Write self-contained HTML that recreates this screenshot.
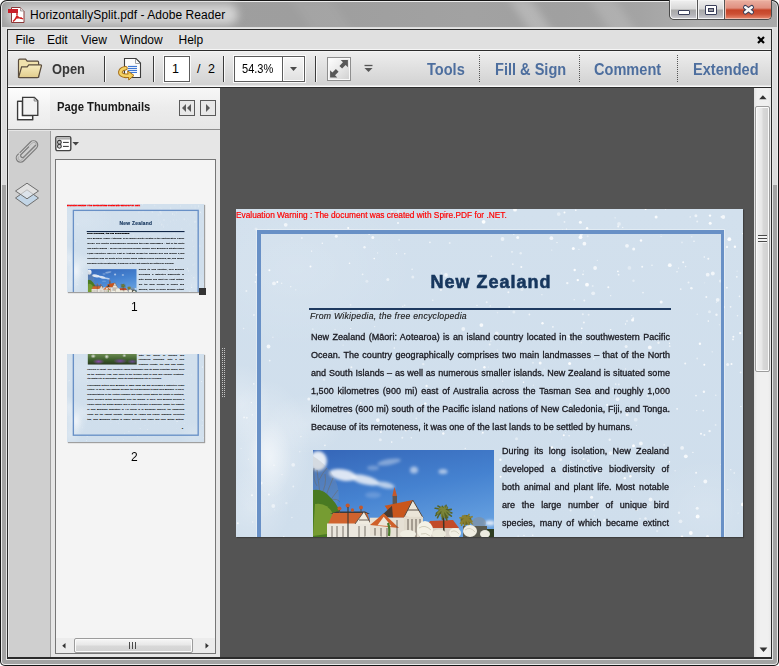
<!DOCTYPE html>
<html><head><meta charset="utf-8">
<style>
*{box-sizing:border-box;margin:0;padding:0}
html,body{width:779px;height:666px;overflow:hidden;background:#fff}
body{position:relative;font-family:"Liberation Sans",sans-serif}
.a{position:absolute}
svg{position:absolute;overflow:visible}
/* window frame */
#frame{left:0;top:0;width:779px;height:666px;border-radius:7px 7px 5px 5px;background:#a3a3a3;box-shadow:inset 0 0 0 1px #151515,inset 0 0 0 2px #ececec}
#frameTop{left:2px;top:2px;width:775px;height:183px;background:linear-gradient(#dedede,#dadada);border-radius:5px 5px 0 0}
#title{left:2px;top:2px;width:775px;height:26px;border-radius:5px 5px 0 0;overflow:hidden;background:linear-gradient(90deg,#a0a0a0 0,#9e9e9e 300px,#a2a2a2 470px,#a0a0a0 560px,#a4a4a4 640px,#b0b0b0 700px,#a8a8a8 779px)}
.streak{position:absolute;top:-4px;height:36px;background:rgba(255,255,255,0.22);transform:skewX(34deg);filter:blur(5px)}
#glow{left:6px;top:4px;width:232px;height:21px;background:#d2d2d2;border-radius:10px;filter:blur(4px)}
#titleLine{left:2px;top:27px;width:775px;height:1px;background:#dedede}
#ttext{left:30px;top:8px;font-size:12px;color:#000;white-space:nowrap;letter-spacing:0.05px}
/* client */
#client{left:7px;top:29px;width:765px;height:630px;background:#2b2b2b}
#menubar{left:8px;top:30px;width:763px;height:20px;background:#e0e0e0;border-bottom:1px solid #f6f6f6}
.mi{top:33px;font-size:12px;color:#000;white-space:nowrap}
#toolbar{left:8px;top:51px;width:763px;height:36px;background:linear-gradient(#fbfbfb 0,#ededed 1px,#d2d2d2 34px,#f8f8f8 35px)}
.sep{width:1px;background:#3c3c3c;top:56px;height:26px;box-shadow:1px 0 0 #fafafa}
.dsep{width:1px;top:55px;height:27px;background:repeating-linear-gradient(#555 0 1px,transparent 1px 2px)}
.tb{font-weight:bold;font-size:16px;color:#4d6e9e;top:61px;white-space:nowrap;transform:scaleX(0.91);transform-origin:0 0}
#doc{left:220px;top:88px;width:534px;height:569px;background:#545454}
#vscroll{left:754px;top:88px;width:17px;height:569px;background:linear-gradient(90deg,#e2e2e2,#f0f0f0 3px,#f0f0f0 14px,#e8e8e8)}
#panel{left:8px;top:88px;width:212px;height:569px;background:#e6e6e6}
#phead{left:8px;top:88px;width:212px;height:42px;background:linear-gradient(#f7f7f7,#ececec 20px,#e6e6e6);border-bottom:1px solid #8c8c8c}
#pheadL{left:8px;top:88px;width:42px;height:42px;background:linear-gradient(#fdfdfd,#f2f2f2 20px,#ebebeb);border-bottom:1px solid #8c8c8c}
#strip{left:8px;top:131px;width:43px;height:526px;background:#cfcfcf;border-left:1px solid #e8e8e8;border-right:1px solid #9e9e9e}
#tpane{left:55px;top:159px;width:161px;height:495px;background:#f4f4f4;border:1px solid #767676}

.page{position:absolute;left:0;top:0;width:507px;height:328px;overflow:hidden;background:#d0dfec}
.page svg{position:absolute}
.pbg{position:absolute;left:0;top:0;width:507px;height:328px;background:
 radial-gradient(ellipse 22px 40px at 34px 250px,rgba(255,255,255,0.45),rgba(255,255,255,0) 100%),
 radial-gradient(ellipse 45px 70px at 30px 240px,rgba(255,255,255,0.4),rgba(255,255,255,0) 100%),
 radial-gradient(ellipse 40px 30px at 70px 215px,rgba(255,255,255,0.22),rgba(255,255,255,0) 100%),
 radial-gradient(ellipse 30px 40px at 5px 195px,rgba(255,255,255,0.3),rgba(255,255,255,0) 100%),
 radial-gradient(ellipse 40px 40px at 15px 300px,rgba(255,255,255,0.25),rgba(255,255,255,0) 100%),
 radial-gradient(ellipse 60px 50px at 470px 300px,rgba(255,255,255,0.14),rgba(255,255,255,0) 100%),
 radial-gradient(ellipse 120px 80px at 60px 60px,rgba(255,255,255,0.12),rgba(255,255,255,0) 100%),
 linear-gradient(#d2e0ed,#cfdeec)}
.warn{position:absolute;left:0;top:0.5px;font-size:8.3px;line-height:10px;color:#ff0000;white-space:nowrap;-webkit-text-stroke:0.2px #f00}
.pframe{position:absolute;left:21px;top:21px;width:467px;height:400px;border:4px solid #6890c6;border-right-width:3px;box-shadow:0 0 0 1px rgba(255,255,255,0.35)}
.ptitle{position:absolute;left:194.5px;top:62.5px;font-weight:bold;font-size:18px;line-height:20px;letter-spacing:1.0px;color:#17375e;white-space:nowrap;-webkit-text-stroke:0.6px #17375e}
.prule{position:absolute;left:73px;top:99px;width:362px;height:2px;background:#1f3a60}
.pital{position:absolute;left:74px;top:102px;font-style:italic;font-size:8.7px;line-height:10px;color:#222;-webkit-text-stroke:0.15px #222;white-space:nowrap;letter-spacing:0.25px}
.pl{position:absolute;font-size:9px;line-height:18px;color:#18181f;white-space:nowrap;letter-spacing:0.05px;-webkit-text-stroke:0.3px #18181f}
#pg1t .pl,#pg2t .pl{color:#000;-webkit-text-stroke:0.35px #000}
#pg1t .prule{height:3.7px;top:99.9px;background:#0c2244}
#pg1t .pframe,#pg2t .pframe2{border-width:5px}
#pg1t .warn{-webkit-text-stroke:1.6px #f00}
#pg1t .pital{color:#000;-webkit-text-stroke:0.9px #000}
.photo{position:absolute;left:77px;top:241px;width:181px;height:100px;overflow:hidden}
.pframe2{position:absolute;left:21px;top:-100px;width:467px;height:403px;border:4px solid #6890c6;border-right-width:3px}
.photo2{position:absolute;left:77px;top:0;width:181px;height:39px;background:radial-gradient(ellipse 10px 8px at 20px 8px,rgba(240,240,240,0.9),transparent),radial-gradient(ellipse 9px 9px at 70px 10px,rgba(245,245,245,0.9),transparent),radial-gradient(ellipse 8px 7px at 135px 6px,rgba(235,235,240,0.8),transparent),radial-gradient(ellipse 22px 10px at 40px 28px,#8a4aa8,transparent),radial-gradient(ellipse 26px 10px at 120px 26px,#7a48a0,transparent),radial-gradient(ellipse 20px 9px at 165px 28px,#6a4a90,transparent),linear-gradient(#6a8a50,#3a5a2a 60%,#2a3a20)}
</style></head><body>
<div id="frame" class="a"></div>
<div id="frameTop" class="a"></div>
<div id="title" class="a"><div class="streak" style="left:518px;width:22px"></div><div class="streak" style="left:598px;width:26px;background:rgba(255,255,255,0.14)"></div><div class="streak" style="left:300px;width:40px;background:rgba(255,255,255,0.06)"></div></div>
<div id="glow" class="a"></div>
<div id="titleLine" class="a"></div>
<!-- pdf icon -->
<svg style="left:0;top:0" width="30" height="28">
 <path d="M11.5 7.5 H20.5 L24 11 V22.5 H11.5 Z" fill="#fff" stroke="#8a3a3a" stroke-width="1"/>
 <path d="M20.5 7.5 V11 H24" fill="#e0e0e0" stroke="#9a8a8a" stroke-width="0.8"/>
 <rect x="8" y="9" width="10" height="4" fill="#c8202a"/>
 <path d="M17 13 C17.5 16 16 19 13 21.5 M15.5 18 C18 17.5 21 17.5 23 19 M17 13 C16 16 19 19 22 18" fill="none" stroke="#d02020" stroke-width="1.4"/>
</svg>
<div id="ttext" class="a">HorizontallySplit.pdf - Adobe Reader</div>
<!-- caption buttons -->
<div class="a" style="left:669px;top:0;width:103px;height:20px;border:1px solid #4a4a4a;border-top:none;border-radius:0 0 5px 5px;overflow:hidden;background:#555">
 <div class="a" style="left:0;top:0;width:27px;height:19px;border-radius:0 0 0 4px;background:linear-gradient(#f0f0f0 0,#d8d8d8 9px,#a9a9a9 10px,#b4b4b8 15px,#d0d0d6 19px);box-shadow:inset 0 0 0 1px #f4f4f4"></div>
 <div class="a" style="left:28px;top:0;width:26px;height:19px;background:linear-gradient(#f0f0f0 0,#d8d8d8 9px,#a9a9a9 10px,#b4b4b8 15px,#d0d0d6 19px);box-shadow:inset 0 0 0 1px #f4f4f4"></div>
 <div class="a" style="left:55px;top:0;width:47px;height:19px;border-radius:0 0 4px 0;background:linear-gradient(#eab0a2 0,#e09080 8px,#c64428 10px,#cc5034 14px,#e88a70 19px);box-shadow:inset 0 0 0 1px #f0b8a8"></div>
</div>
<div class="a" style="left:678px;top:10px;width:12px;height:5px;background:#fff;border:1px solid #3a3f5a;border-radius:1px"></div>
<div class="a" style="left:705px;top:5px;width:12px;height:10px;background:#fff;border:1px solid #3a3f5a;border-radius:1px"></div>
<div class="a" style="left:708px;top:8px;width:6px;height:4px;background:#9a9aa0;border:1px solid #3a3f5a"></div>
<svg style="left:741px;top:3px" width="16" height="14">
 <path d="M4.3 4.3 L10.7 9.2 M10.7 4.3 L4.3 9.2" stroke="#3a3f5a" stroke-width="4.6" stroke-linecap="round"/>
 <path d="M4.3 4.3 L10.7 9.2 M10.7 4.3 L4.3 9.2" stroke="#fafafa" stroke-width="2.6" stroke-linecap="round"/>
</svg>

<div class="a" style="left:6px;top:28px;width:767px;height:632px;background:#e6e6e6"></div>
<div id="client" class="a"></div>
<div id="menubar" class="a"></div>
<div class="a mi" style="left:15.5px">File</div>
<div class="a mi" style="left:47px">Edit</div>
<div class="a mi" style="left:81px">View</div>
<div class="a mi" style="left:120px">Window</div>
<div class="a mi" style="left:178.5px">Help</div>
<svg style="left:756px;top:35px" width="10" height="10">
 <path d="M2 2 L8 8 M8 2 L2 8" stroke="#000" stroke-width="2.2"/>
</svg>

<div id="toolbar" class="a"></div>
<!-- folder icon -->
<svg style="left:0;top:50px" width="50" height="36">
 <defs><linearGradient id="fg" x1="0" y1="0" x2="0" y2="1"><stop offset="0" stop-color="#f8eec0"/><stop offset="1" stop-color="#e2cc8c"/></linearGradient></defs>
 <path d="M18.5 10.5 Q18.5 9.2 19.8 9.2 H25.6 L27.2 11.2 H37.6 Q38.6 11.2 38.6 12.4 V27.2 H18.5 Z" fill="#f0e2ac" stroke="#5a4c3c" stroke-width="1.2"/>
 <path d="M21.6 16.8 H27.2 L28.8 14.8 H40.6 Q41.8 14.8 41.4 16 L38.6 26.6 Q38.4 27.6 37.4 27.6 H19.6 Q18.6 27.6 18.8 26.6 Z" fill="url(#fg)" stroke="#5a4c3c" stroke-width="1.2"/>
</svg>
<div class="a" style="left:52px;top:61px;font-weight:bold;font-size:14px;color:#383838;transform:scaleX(0.92);transform-origin:0 0">Open</div>
<div class="a sep" style="left:104px"></div>
<!-- create pdf icon -->
<svg style="left:110px;top:50px" width="40" height="36">
 <path d="M14.5 8.5 H26 L30.5 13 V27.5 H14.5 Z" fill="#fcfcfc" stroke="#3c3c3c" stroke-width="1.1"/>
 <path d="M25.5 9 V13.5 H30" fill="none" stroke="#9a9a9a" stroke-width="0.9"/>
 <path d="M18 16.4 H27 M18 18.4 H27 M18 20.4 H27 M18 22.4 H27 M18 24.4 H21" stroke="#2a6ad0" stroke-width="1"/>
 <path d="M15.5 18.2 C10.5 18.6 9.2 22.6 11.6 24.6 C13.2 26 16 26 18.6 25.6" fill="none" stroke="#a8701a" stroke-width="4.6" stroke-linecap="round"/>
 <path d="M17.6 20.8 L24 25.4 L18.8 30 Z" fill="#f0c850" stroke="#a8701a" stroke-width="1" stroke-linejoin="round"/>
 <path d="M15.5 18.2 C10.5 18.6 9.2 22.6 11.6 24.6 C13.2 26 16 26 19.6 25.6" fill="none" stroke="#f4d264" stroke-width="2.6" stroke-linecap="round"/>
</svg>
<div class="a sep" style="left:153px"></div>
<div class="a" style="left:164px;top:56px;width:26px;height:26px;background:#fff;border:1px solid #5c5c5c;box-shadow:0 0 0 1px #fafafa"></div>
<div class="a" style="left:172px;top:62px;font-size:12.5px;color:#000">1</div>
<div class="a" style="left:197px;top:62px;font-size:12.5px;color:#000;word-spacing:4px">/ 2</div>
<div class="a sep" style="left:223px"></div>
<div class="a" style="left:234px;top:56px;width:71px;height:26px;background:#fff;border:1px solid #5c5c5c;box-shadow:0 0 0 1px #fafafa"></div>
<div class="a" style="left:282px;top:57px;width:22px;height:24px;background:linear-gradient(#f6f6f6,#e0e0e0);border-left:1px solid #5c5c5c;box-shadow:inset 1px 1px 0 #fff,inset -1px -1px 0 #fff"></div>
<div class="a" style="left:242px;top:61px;font-size:13px;color:#000;transform:scaleX(0.85);transform-origin:0 0">54.3%</div>
<svg style="left:288px;top:66px" width="12" height="8"><path d="M2 1 H9 L5.5 5 Z" fill="#4a4a4a"/></svg>
<div class="a sep" style="left:315px"></div>
<!-- fullscreen -->
<div class="a" style="left:327px;top:57px;width:24px;height:24px;border:1px solid #8e8e8e;background:linear-gradient(135deg,#ffffff,#e4e4e4 60%,#cfcfcf);box-shadow:inset 0 0 0 1px #f8f8f8"></div>
<svg style="left:327px;top:57px" width="24" height="24">
 <path d="M13.7 3.1 L20.9 3.1 L20.9 10.3 L18.64 8.04 L15.1 11.58 L12.42 8.9 L15.96 5.36 Z" fill="#585858"/>
 <path d="M3.1 13.3 L5.36 15.56 L8.9 12.02 L11.58 14.7 L8.04 18.24 L10.3 20.5 L3.1 20.5 Z" fill="#585858"/>
</svg>
<svg style="left:362px;top:62px" width="13" height="12">
 <path d="M2.5 3.5 H10.5" stroke="#555" stroke-width="1.3"/>
 <path d="M2.5 6 H10.5 L6.5 10 Z" fill="#555"/>
</svg>
<div class="a tb" style="left:427px">Tools</div>
<div class="a dsep" style="left:479px"></div>
<div class="a tb" style="left:494.5px">Fill &amp; Sign</div>
<div class="a dsep" style="left:579px"></div>
<div class="a tb" style="left:594px">Comment</div>
<div class="a dsep" style="left:677px"></div>
<div class="a tb" style="left:692.5px">Extended</div>

<div id="doc" class="a"></div>
<div id="vscroll" class="a"></div>
<div id="panel" class="a"></div>
<div id="phead" class="a"></div>
<div id="pheadL" class="a"></div>
<div id="strip" class="a"></div>
<div id="tpane" class="a"></div>
<!-- splitter dots -->
<svg style="left:221px;top:348px" width="5" height="49"><rect x="1" y="0" width="1" height="1" fill="#c4c4c4"/><rect x="3" y="0" width="1" height="1" fill="#c4c4c4"/><rect x="1" y="2" width="1" height="1" fill="#c4c4c4"/><rect x="3" y="2" width="1" height="1" fill="#c4c4c4"/><rect x="1" y="4" width="1" height="1" fill="#c4c4c4"/><rect x="3" y="4" width="1" height="1" fill="#c4c4c4"/><rect x="1" y="6" width="1" height="1" fill="#c4c4c4"/><rect x="3" y="6" width="1" height="1" fill="#c4c4c4"/><rect x="1" y="8" width="1" height="1" fill="#c4c4c4"/><rect x="3" y="8" width="1" height="1" fill="#c4c4c4"/><rect x="1" y="10" width="1" height="1" fill="#c4c4c4"/><rect x="3" y="10" width="1" height="1" fill="#c4c4c4"/><rect x="1" y="12" width="1" height="1" fill="#c4c4c4"/><rect x="3" y="12" width="1" height="1" fill="#c4c4c4"/><rect x="1" y="14" width="1" height="1" fill="#c4c4c4"/><rect x="3" y="14" width="1" height="1" fill="#c4c4c4"/><rect x="1" y="16" width="1" height="1" fill="#c4c4c4"/><rect x="3" y="16" width="1" height="1" fill="#c4c4c4"/><rect x="1" y="18" width="1" height="1" fill="#c4c4c4"/><rect x="3" y="18" width="1" height="1" fill="#c4c4c4"/><rect x="1" y="20" width="1" height="1" fill="#c4c4c4"/><rect x="3" y="20" width="1" height="1" fill="#c4c4c4"/><rect x="1" y="22" width="1" height="1" fill="#c4c4c4"/><rect x="3" y="22" width="1" height="1" fill="#c4c4c4"/><rect x="1" y="24" width="1" height="1" fill="#c4c4c4"/><rect x="3" y="24" width="1" height="1" fill="#c4c4c4"/><rect x="1" y="26" width="1" height="1" fill="#c4c4c4"/><rect x="3" y="26" width="1" height="1" fill="#c4c4c4"/><rect x="1" y="28" width="1" height="1" fill="#c4c4c4"/><rect x="3" y="28" width="1" height="1" fill="#c4c4c4"/><rect x="1" y="30" width="1" height="1" fill="#c4c4c4"/><rect x="3" y="30" width="1" height="1" fill="#c4c4c4"/><rect x="1" y="32" width="1" height="1" fill="#c4c4c4"/><rect x="3" y="32" width="1" height="1" fill="#c4c4c4"/><rect x="1" y="34" width="1" height="1" fill="#c4c4c4"/><rect x="3" y="34" width="1" height="1" fill="#c4c4c4"/><rect x="1" y="36" width="1" height="1" fill="#c4c4c4"/><rect x="3" y="36" width="1" height="1" fill="#c4c4c4"/><rect x="1" y="38" width="1" height="1" fill="#c4c4c4"/><rect x="3" y="38" width="1" height="1" fill="#c4c4c4"/><rect x="1" y="40" width="1" height="1" fill="#c4c4c4"/><rect x="3" y="40" width="1" height="1" fill="#c4c4c4"/><rect x="1" y="42" width="1" height="1" fill="#c4c4c4"/><rect x="3" y="42" width="1" height="1" fill="#c4c4c4"/><rect x="1" y="44" width="1" height="1" fill="#c4c4c4"/><rect x="3" y="44" width="1" height="1" fill="#c4c4c4"/><rect x="1" y="46" width="1" height="1" fill="#c4c4c4"/><rect x="3" y="46" width="1" height="1" fill="#c4c4c4"/><rect x="1" y="48" width="1" height="1" fill="#c4c4c4"/><rect x="3" y="48" width="1" height="1" fill="#c4c4c4"/></svg>
<!-- right scrollbar -->
<svg style="left:754px;top:88px" width="17" height="569">
 <path d="M5.2 11.2 H12.6 L8.9 7.2 Z" fill="#333"/>
 <path d="M5.6 559.6 H13.4 L9.5 564 Z" fill="#333"/>
</svg>
<div class="a" style="left:755px;top:106px;width:15px;height:266px;border:1px solid #9c9c9c;border-radius:2px;background:linear-gradient(90deg,#f4f4f4,#e6e6e6 45%,#d8d8d8 55%,#d0d0d0);box-shadow:inset 0 0 0 1px #fbfbfb"></div>
<div class="a" style="left:758px;top:235px;width:9px;height:8px;background:repeating-linear-gradient(#4a4a4a 0 1px,#f4f4f4 1px 3px)"></div>
<!-- page -->
<div class="a" style="left:236px;top:209px;width:507px;height:328px;box-shadow:1px 1px 1px rgba(0,0,0,0.25)"><div class="page" id="pg1"><div class="pbg"></div><svg width="507" height="328" style="left:0;top:0"><defs><filter id="sbpg1"><feGaussianBlur stdDeviation="0.35"/></filter></defs><g filter="url(#sbpg1)"><circle cx="236.1" cy="166.6" r="0.8" fill="#fff" opacity="0.83"/><circle cx="241.2" cy="201.4" r="1.9" fill="#fff" opacity="0.53"/><circle cx="46.0" cy="265.6" r="0.6" fill="#fff" opacity="0.71"/><circle cx="304.0" cy="255.2" r="0.9" fill="#fff" opacity="0.66"/><circle cx="324.6" cy="163.9" r="1.9" fill="#fff" opacity="0.74"/><circle cx="260.0" cy="9.8" r="0.7" fill="#fff" opacity="0.59"/><circle cx="429.6" cy="0.2" r="0.6" fill="#fff" opacity="0.63"/><circle cx="497.0" cy="130.4" r="0.9" fill="#fff" opacity="0.82"/><circle cx="136.8" cy="28.6" r="1.5" fill="#fff" opacity="0.80"/><circle cx="59.8" cy="80.8" r="0.6" fill="#fff" opacity="0.63"/><circle cx="246.8" cy="223.7" r="0.9" fill="#fff" opacity="0.94"/><circle cx="390.1" cy="137.5" r="1.5" fill="#fff" opacity="0.60"/><circle cx="407.3" cy="99.8" r="0.9" fill="#fff" opacity="0.46"/><circle cx="504.9" cy="197.5" r="0.6" fill="#fff" opacity="0.94"/><circle cx="166.8" cy="97.2" r="0.7" fill="#fff" opacity="0.48"/><circle cx="322.7" cy="5.1" r="1.9" fill="#fff" opacity="0.43"/><circle cx="297.7" cy="273.0" r="1.5" fill="#fff" opacity="0.46"/><circle cx="476.8" cy="64.5" r="1.9" fill="#fff" opacity="0.71"/><circle cx="213.7" cy="34.1" r="1.0" fill="#fff" opacity="0.49"/><circle cx="357.2" cy="84.3" r="1.9" fill="#fff" opacity="0.53"/><circle cx="88.9" cy="236.3" r="0.9" fill="#fff" opacity="0.64"/><circle cx="331.3" cy="202.0" r="0.9" fill="#fff" opacity="0.90"/><circle cx="103.4" cy="5.4" r="1.9" fill="#fff" opacity="0.50"/><circle cx="493.3" cy="30.2" r="1.9" fill="#fff" opacity="0.94"/><circle cx="333.1" cy="226.7" r="0.8" fill="#fff" opacity="0.70"/><circle cx="468.3" cy="155.7" r="1.0" fill="#fff" opacity="0.93"/><circle cx="10.8" cy="208.7" r="1.0" fill="#fff" opacity="0.54"/><circle cx="506.7" cy="24.7" r="0.6" fill="#fff" opacity="0.89"/><circle cx="373.7" cy="230.8" r="1.2" fill="#fff" opacity="0.56"/><circle cx="290.4" cy="205.0" r="0.6" fill="#fff" opacity="0.72"/><circle cx="446.1" cy="238.9" r="1.9" fill="#fff" opacity="0.61"/><circle cx="425.1" cy="27.5" r="0.6" fill="#fff" opacity="0.54"/><circle cx="57.2" cy="255.8" r="1.9" fill="#fff" opacity="0.50"/><circle cx="165.8" cy="218.4" r="1.5" fill="#fff" opacity="0.83"/><circle cx="382.6" cy="65.7" r="0.9" fill="#fff" opacity="0.70"/><circle cx="160.5" cy="44.7" r="0.6" fill="#fff" opacity="0.78"/><circle cx="481.7" cy="90.8" r="1.9" fill="#fff" opacity="0.63"/><circle cx="469.3" cy="272.5" r="1.9" fill="#fff" opacity="0.75"/><circle cx="363.2" cy="276.1" r="1.2" fill="#fff" opacity="0.39"/><circle cx="16.0" cy="286.3" r="1.0" fill="#fff" opacity="0.69"/><circle cx="156.7" cy="259.6" r="0.8" fill="#fff" opacity="0.59"/><circle cx="96.3" cy="252.3" r="0.8" fill="#fff" opacity="0.83"/><circle cx="498.9" cy="37.8" r="1.2" fill="#fff" opacity="0.93"/><circle cx="347.0" cy="65.4" r="0.8" fill="#fff" opacity="0.78"/><circle cx="382.8" cy="175.4" r="0.9" fill="#fff" opacity="0.51"/><circle cx="175.3" cy="228.7" r="0.8" fill="#fff" opacity="0.59"/><circle cx="401.5" cy="297.2" r="1.5" fill="#fff" opacity="0.43"/><circle cx="404.0" cy="309.7" r="0.9" fill="#fff" opacity="0.41"/><circle cx="439.1" cy="261.8" r="0.7" fill="#fff" opacity="0.48"/><circle cx="272.2" cy="259.4" r="0.6" fill="#fff" opacity="0.56"/><circle cx="389.5" cy="159.9" r="0.7" fill="#fff" opacity="0.61"/><circle cx="17.8" cy="174.9" r="0.8" fill="#fff" opacity="0.63"/><circle cx="506.9" cy="295.4" r="1.9" fill="#fff" opacity="0.92"/><circle cx="249.7" cy="311.3" r="0.9" fill="#fff" opacity="0.61"/><circle cx="283.3" cy="272.6" r="0.8" fill="#fff" opacity="0.66"/><circle cx="427.7" cy="183.7" r="1.5" fill="#fff" opacity="0.92"/><circle cx="441.1" cy="199.9" r="0.8" fill="#fff" opacity="0.93"/><circle cx="265.8" cy="187.9" r="0.7" fill="#fff" opacity="0.65"/><circle cx="285.4" cy="161.1" r="0.7" fill="#fff" opacity="0.91"/><circle cx="204.9" cy="80.8" r="1.2" fill="#fff" opacity="0.61"/><circle cx="413.6" cy="295.4" r="1.2" fill="#fff" opacity="0.42"/><circle cx="212.7" cy="9.6" r="0.6" fill="#fff" opacity="0.37"/><circle cx="78.9" cy="3.9" r="1.2" fill="#fff" opacity="0.50"/><circle cx="252.9" cy="163.9" r="1.0" fill="#fff" opacity="0.78"/><circle cx="355.6" cy="288.2" r="1.5" fill="#fff" opacity="0.85"/><circle cx="270.7" cy="71.6" r="0.8" fill="#fff" opacity="0.49"/><circle cx="213.8" cy="259.1" r="1.5" fill="#fff" opacity="0.73"/><circle cx="405.0" cy="31.5" r="1.2" fill="#fff" opacity="0.90"/><circle cx="491.0" cy="37.9" r="1.2" fill="#fff" opacity="0.65"/><circle cx="347.6" cy="62.0" r="0.7" fill="#fff" opacity="0.36"/><circle cx="244.0" cy="62.2" r="0.8" fill="#fff" opacity="0.85"/><circle cx="502.1" cy="304.0" r="0.6" fill="#fff" opacity="0.43"/><circle cx="345.2" cy="25.5" r="1.5" fill="#fff" opacity="0.63"/><circle cx="261.3" cy="141.1" r="0.6" fill="#fff" opacity="0.73"/><circle cx="20.7" cy="65.7" r="1.2" fill="#fff" opacity="0.79"/><circle cx="205.5" cy="64.0" r="0.6" fill="#fff" opacity="0.54"/><circle cx="460.7" cy="308.2" r="0.9" fill="#fff" opacity="0.65"/><circle cx="498.2" cy="264.0" r="0.7" fill="#fff" opacity="0.80"/><circle cx="394.4" cy="267.2" r="1.2" fill="#fff" opacity="0.88"/><circle cx="352.3" cy="251.7" r="1.5" fill="#fff" opacity="0.47"/><circle cx="93.7" cy="261.5" r="0.7" fill="#fff" opacity="0.36"/><circle cx="180.3" cy="209.5" r="0.9" fill="#fff" opacity="0.51"/><circle cx="487.4" cy="98.0" r="1.5" fill="#fff" opacity="0.69"/><circle cx="325.6" cy="230.0" r="0.6" fill="#fff" opacity="0.42"/><circle cx="54.8" cy="77.7" r="0.6" fill="#fff" opacity="0.81"/><circle cx="328.5" cy="3.5" r="1.0" fill="#fff" opacity="0.89"/><circle cx="288.0" cy="326.4" r="0.7" fill="#fff" opacity="0.68"/><circle cx="338.9" cy="313.4" r="0.8" fill="#fff" opacity="0.58"/><circle cx="491.8" cy="280.7" r="0.6" fill="#fff" opacity="0.61"/><circle cx="250.7" cy="93.3" r="1.0" fill="#fff" opacity="0.57"/><circle cx="144.9" cy="214.9" r="1.0" fill="#fff" opacity="0.75"/><circle cx="379.1" cy="8.8" r="0.6" fill="#fff" opacity="0.73"/><circle cx="207.3" cy="224.5" r="1.2" fill="#fff" opacity="0.80"/><circle cx="37.3" cy="297.0" r="1.9" fill="#fff" opacity="0.50"/><circle cx="383.0" cy="14.9" r="1.9" fill="#fff" opacity="0.44"/><circle cx="486.7" cy="80.4" r="0.6" fill="#fff" opacity="0.72"/><circle cx="231.0" cy="66.8" r="0.8" fill="#fff" opacity="0.42"/><circle cx="224.5" cy="219.1" r="1.0" fill="#fff" opacity="0.73"/><circle cx="345.8" cy="119.4" r="0.8" fill="#fff" opacity="0.92"/><circle cx="372.3" cy="78.2" r="1.0" fill="#fff" opacity="0.82"/><circle cx="316.9" cy="117.8" r="0.9" fill="#fff" opacity="0.73"/><circle cx="381.9" cy="62.3" r="0.9" fill="#fff" opacity="0.88"/><circle cx="20.0" cy="19.9" r="1.5" fill="#fff" opacity="0.37"/><circle cx="19.3" cy="73.0" r="0.7" fill="#fff" opacity="0.90"/><circle cx="245.4" cy="116.1" r="1.9" fill="#fff" opacity="0.80"/><circle cx="425.1" cy="24.4" r="0.9" fill="#fff" opacity="0.62"/><circle cx="378.9" cy="128.0" r="0.8" fill="#fff" opacity="0.74"/><circle cx="501.5" cy="106.7" r="0.8" fill="#fff" opacity="0.61"/><circle cx="245.8" cy="224.8" r="0.6" fill="#fff" opacity="0.40"/><circle cx="108.1" cy="217.2" r="1.0" fill="#fff" opacity="0.65"/><circle cx="110.9" cy="215.6" r="0.7" fill="#fff" opacity="0.54"/><circle cx="348.3" cy="91.6" r="1.0" fill="#fff" opacity="0.62"/><circle cx="112.2" cy="317.4" r="0.9" fill="#fff" opacity="0.40"/><circle cx="420.1" cy="7.9" r="1.5" fill="#fff" opacity="0.83"/><circle cx="374.6" cy="120.8" r="0.8" fill="#fff" opacity="0.85"/><circle cx="285.3" cy="57.9" r="1.0" fill="#fff" opacity="0.84"/><circle cx="112.2" cy="18.9" r="1.0" fill="#fff" opacity="0.93"/><circle cx="330.2" cy="263.8" r="1.0" fill="#fff" opacity="0.82"/><circle cx="455.8" cy="27.8" r="0.8" fill="#fff" opacity="0.41"/><circle cx="413.8" cy="138.4" r="1.9" fill="#fff" opacity="0.81"/><circle cx="264.4" cy="250.8" r="1.2" fill="#fff" opacity="0.83"/><circle cx="168.8" cy="44.8" r="0.7" fill="#fff" opacity="0.77"/><circle cx="463.9" cy="134.7" r="1.2" fill="#fff" opacity="0.86"/><circle cx="408.6" cy="273.5" r="0.6" fill="#fff" opacity="0.66"/><circle cx="360.0" cy="263.1" r="1.5" fill="#fff" opacity="0.90"/><circle cx="346.8" cy="105.2" r="1.0" fill="#fff" opacity="0.51"/><circle cx="449.2" cy="154.6" r="1.0" fill="#fff" opacity="0.74"/><circle cx="393.4" cy="58.9" r="1.9" fill="#fff" opacity="0.36"/><circle cx="243.9" cy="262.5" r="0.9" fill="#fff" opacity="0.46"/><circle cx="301.6" cy="73.5" r="1.0" fill="#fff" opacity="0.59"/><circle cx="461.7" cy="307.5" r="1.9" fill="#fff" opacity="0.86"/><circle cx="334.7" cy="253.1" r="0.9" fill="#fff" opacity="0.59"/><circle cx="494.8" cy="260.7" r="0.6" fill="#fff" opacity="0.74"/><circle cx="120.5" cy="3.6" r="1.2" fill="#fff" opacity="0.62"/><circle cx="210.8" cy="253.2" r="0.8" fill="#fff" opacity="0.73"/><circle cx="503.5" cy="87.4" r="0.8" fill="#fff" opacity="0.69"/><circle cx="75.6" cy="42.1" r="0.7" fill="#fff" opacity="0.88"/><circle cx="351.7" cy="27.2" r="1.0" fill="#fff" opacity="0.36"/><circle cx="396.2" cy="144.4" r="1.5" fill="#fff" opacity="0.67"/><circle cx="79.9" cy="272.9" r="1.0" fill="#fff" opacity="0.59"/><circle cx="282.1" cy="327.1" r="0.7" fill="#fff" opacity="0.57"/><circle cx="348.4" cy="34.7" r="1.9" fill="#fff" opacity="0.80"/><circle cx="397.7" cy="40.0" r="1.5" fill="#fff" opacity="0.78"/><circle cx="241.0" cy="96.3" r="0.6" fill="#fff" opacity="0.86"/><circle cx="428.2" cy="235.9" r="0.8" fill="#fff" opacity="0.52"/><circle cx="190.6" cy="177.0" r="1.2" fill="#fff" opacity="0.80"/><circle cx="281.7" cy="28.5" r="1.5" fill="#fff" opacity="0.79"/><circle cx="167.0" cy="310.0" r="1.2" fill="#fff" opacity="0.62"/><circle cx="193.9" cy="33.4" r="0.8" fill="#fff" opacity="0.76"/><circle cx="359.1" cy="59.0" r="1.9" fill="#fff" opacity="0.71"/><circle cx="45.7" cy="74.3" r="0.7" fill="#fff" opacity="0.61"/><circle cx="391.0" cy="112.1" r="0.8" fill="#fff" opacity="0.74"/><circle cx="388.8" cy="269.3" r="1.2" fill="#fff" opacity="0.90"/><circle cx="315.9" cy="238.4" r="1.2" fill="#fff" opacity="0.94"/><circle cx="400.4" cy="216.6" r="0.6" fill="#fff" opacity="0.51"/><circle cx="95.7" cy="100.6" r="1.5" fill="#fff" opacity="0.47"/><circle cx="168.7" cy="96.3" r="0.8" fill="#fff" opacity="0.50"/><circle cx="273.2" cy="97.9" r="0.8" fill="#fff" opacity="0.69"/><circle cx="358.4" cy="307.0" r="0.6" fill="#fff" opacity="0.73"/><circle cx="100.3" cy="27.3" r="1.5" fill="#fff" opacity="0.77"/><circle cx="166.9" cy="304.7" r="1.9" fill="#fff" opacity="0.88"/><circle cx="229.3" cy="239.4" r="0.7" fill="#fff" opacity="0.69"/><circle cx="414.5" cy="197.3" r="0.6" fill="#fff" opacity="0.52"/><circle cx="454.8" cy="79.0" r="0.8" fill="#fff" opacity="0.46"/><circle cx="277.8" cy="25.0" r="0.8" fill="#fff" opacity="0.82"/><circle cx="471.5" cy="327.6" r="1.5" fill="#fff" opacity="0.72"/><circle cx="324.6" cy="250.4" r="1.5" fill="#fff" opacity="0.63"/><circle cx="88.1" cy="170.5" r="1.2" fill="#fff" opacity="0.38"/><circle cx="397.5" cy="236.7" r="1.5" fill="#fff" opacity="0.93"/><circle cx="304.2" cy="154.1" r="1.5" fill="#fff" opacity="0.80"/><circle cx="433.5" cy="134.2" r="0.7" fill="#fff" opacity="0.89"/><circle cx="266.7" cy="172.2" r="0.6" fill="#fff" opacity="0.54"/><circle cx="371.1" cy="196.0" r="1.0" fill="#fff" opacity="0.88"/><circle cx="444.7" cy="80.1" r="0.9" fill="#fff" opacity="0.65"/><circle cx="266.8" cy="78.4" r="1.5" fill="#fff" opacity="0.91"/><circle cx="446.0" cy="327.8" r="1.2" fill="#fff" opacity="0.87"/><circle cx="213.7" cy="264.1" r="1.5" fill="#fff" opacity="0.69"/><circle cx="458.0" cy="32.3" r="0.7" fill="#fff" opacity="0.88"/><circle cx="292.0" cy="148.6" r="1.0" fill="#fff" opacity="0.36"/><circle cx="87.2" cy="144.6" r="1.5" fill="#fff" opacity="0.43"/><circle cx="351.0" cy="75.7" r="1.9" fill="#fff" opacity="0.89"/><circle cx="495.5" cy="155.0" r="1.0" fill="#fff" opacity="0.87"/><circle cx="351.1" cy="19.3" r="1.2" fill="#fff" opacity="0.89"/><circle cx="8.1" cy="208.4" r="0.9" fill="#fff" opacity="0.67"/><circle cx="487.4" cy="89.8" r="0.8" fill="#fff" opacity="0.55"/><circle cx="485.2" cy="255.5" r="0.8" fill="#fff" opacity="0.48"/><circle cx="155.7" cy="233.1" r="0.8" fill="#fff" opacity="0.78"/><circle cx="254.2" cy="96.9" r="0.7" fill="#fff" opacity="0.70"/><circle cx="338.2" cy="90.8" r="0.7" fill="#fff" opacity="0.63"/><circle cx="38.7" cy="300.8" r="0.6" fill="#fff" opacity="0.35"/><circle cx="297.4" cy="176.2" r="0.7" fill="#fff" opacity="0.45"/><circle cx="501.1" cy="62.2" r="0.6" fill="#fff" opacity="0.46"/><circle cx="454.8" cy="324.0" r="1.9" fill="#fff" opacity="0.90"/><circle cx="461.2" cy="105.2" r="0.6" fill="#fff" opacity="0.66"/><circle cx="256.4" cy="277.3" r="0.8" fill="#fff" opacity="0.71"/><circle cx="391.0" cy="36.8" r="1.9" fill="#fff" opacity="0.68"/><circle cx="305.9" cy="85.7" r="0.6" fill="#fff" opacity="0.69"/><circle cx="442.6" cy="59.1" r="0.6" fill="#fff" opacity="0.72"/><circle cx="408.7" cy="165.2" r="0.6" fill="#fff" opacity="0.39"/><circle cx="460.0" cy="186.6" r="0.9" fill="#fff" opacity="0.72"/><circle cx="415.6" cy="242.2" r="1.9" fill="#fff" opacity="0.40"/><circle cx="416.0" cy="56.3" r="0.8" fill="#fff" opacity="0.65"/><circle cx="334.1" cy="195.5" r="1.2" fill="#fff" opacity="0.60"/><circle cx="21.4" cy="160.6" r="0.8" fill="#fff" opacity="0.44"/><circle cx="230.8" cy="244.3" r="0.9" fill="#fff" opacity="0.60"/><circle cx="266.5" cy="30.0" r="1.9" fill="#fff" opacity="0.60"/><circle cx="387.0" cy="240.8" r="1.0" fill="#fff" opacity="0.42"/><circle cx="433.7" cy="137.2" r="0.9" fill="#fff" opacity="0.57"/><circle cx="170.9" cy="321.8" r="0.6" fill="#fff" opacity="0.45"/><circle cx="296.7" cy="326.3" r="0.8" fill="#fff" opacity="0.63"/><circle cx="199.2" cy="276.5" r="0.6" fill="#fff" opacity="0.48"/><circle cx="176.1" cy="60.2" r="0.8" fill="#fff" opacity="0.64"/><circle cx="239.6" cy="160.8" r="0.8" fill="#fff" opacity="0.87"/><circle cx="103.7" cy="125.6" r="1.0" fill="#fff" opacity="0.57"/><circle cx="139.2" cy="6.1" r="1.0" fill="#fff" opacity="0.66"/><circle cx="287.7" cy="213.0" r="0.7" fill="#fff" opacity="0.57"/><circle cx="77.8" cy="307.2" r="0.9" fill="#fff" opacity="0.78"/><circle cx="459.9" cy="6.7" r="1.5" fill="#fff" opacity="0.62"/><circle cx="433.3" cy="125.1" r="0.6" fill="#fff" opacity="0.53"/><circle cx="308.2" cy="160.2" r="0.8" fill="#fff" opacity="0.37"/><circle cx="158.3" cy="139.1" r="0.8" fill="#fff" opacity="0.66"/><circle cx="277.9" cy="102.9" r="1.5" fill="#fff" opacity="0.44"/><circle cx="114.6" cy="95.8" r="0.9" fill="#fff" opacity="0.43"/><circle cx="430.0" cy="245.0" r="0.6" fill="#fff" opacity="0.84"/><circle cx="494.6" cy="97.8" r="0.9" fill="#fff" opacity="0.68"/><circle cx="189.7" cy="256.9" r="1.5" fill="#fff" opacity="0.42"/><circle cx="144.3" cy="230.7" r="1.5" fill="#fff" opacity="0.47"/><circle cx="389.5" cy="115.0" r="0.7" fill="#fff" opacity="0.80"/><circle cx="460.1" cy="263.8" r="1.0" fill="#fff" opacity="0.77"/><circle cx="280.5" cy="229.7" r="1.5" fill="#fff" opacity="0.42"/><circle cx="461.2" cy="299.3" r="1.5" fill="#fff" opacity="0.65"/><circle cx="297.0" cy="153.8" r="1.0" fill="#fff" opacity="0.39"/><circle cx="17.9" cy="106.1" r="1.0" fill="#fff" opacity="0.51"/><circle cx="338.7" cy="61.0" r="1.2" fill="#fff" opacity="0.92"/><circle cx="391.1" cy="205.8" r="1.5" fill="#fff" opacity="0.72"/><circle cx="32.3" cy="22.4" r="1.9" fill="#fff" opacity="0.58"/><circle cx="461.2" cy="12.5" r="1.0" fill="#fff" opacity="0.54"/><circle cx="182.7" cy="320.4" r="0.9" fill="#fff" opacity="0.51"/><circle cx="130.9" cy="72.2" r="1.5" fill="#fff" opacity="0.35"/><circle cx="350.4" cy="261.3" r="0.7" fill="#fff" opacity="0.88"/><circle cx="348.1" cy="316.2" r="0.8" fill="#fff" opacity="0.55"/><circle cx="349.5" cy="264.0" r="1.5" fill="#fff" opacity="0.52"/><circle cx="379.7" cy="175.1" r="0.9" fill="#fff" opacity="0.57"/><circle cx="358.0" cy="300.9" r="0.7" fill="#fff" opacity="0.94"/><circle cx="414.6" cy="290.5" r="1.9" fill="#fff" opacity="0.66"/><circle cx="344.4" cy="13.2" r="1.5" fill="#fff" opacity="0.87"/><circle cx="403.8" cy="128.7" r="1.0" fill="#fff" opacity="0.57"/><circle cx="103.9" cy="184.9" r="1.5" fill="#fff" opacity="0.73"/><circle cx="63.7" cy="242.8" r="0.8" fill="#fff" opacity="0.43"/><circle cx="191.1" cy="219.6" r="0.8" fill="#fff" opacity="0.93"/><circle cx="470.3" cy="87.9" r="1.0" fill="#fff" opacity="0.73"/><circle cx="24.7" cy="234.0" r="0.6" fill="#fff" opacity="0.47"/><circle cx="433.8" cy="56.2" r="1.9" fill="#fff" opacity="0.83"/><circle cx="425.2" cy="93.1" r="1.5" fill="#fff" opacity="0.81"/><circle cx="497.4" cy="127.7" r="1.0" fill="#fff" opacity="0.83"/><circle cx="74.5" cy="57.4" r="1.0" fill="#fff" opacity="0.88"/><circle cx="137.0" cy="186.6" r="1.5" fill="#fff" opacity="0.51"/><circle cx="115.4" cy="158.2" r="1.0" fill="#fff" opacity="0.69"/><circle cx="339.8" cy="1.3" r="0.8" fill="#fff" opacity="0.95"/><circle cx="102.5" cy="284.5" r="1.5" fill="#fff" opacity="0.56"/><circle cx="283.8" cy="182.8" r="1.0" fill="#fff" opacity="0.52"/><circle cx="89.2" cy="8.8" r="0.7" fill="#fff" opacity="0.75"/><circle cx="137.4" cy="7.9" r="0.7" fill="#fff" opacity="0.66"/><circle cx="401.7" cy="241.2" r="0.7" fill="#fff" opacity="0.91"/><circle cx="244.4" cy="275.5" r="0.6" fill="#fff" opacity="0.36"/><circle cx="317.8" cy="147.5" r="0.7" fill="#fff" opacity="0.89"/><circle cx="163.1" cy="30.9" r="0.8" fill="#fff" opacity="0.48"/><circle cx="376.8" cy="179.2" r="0.8" fill="#fff" opacity="0.56"/><circle cx="78.9" cy="122.3" r="0.6" fill="#fff" opacity="0.36"/><circle cx="254.8" cy="132.3" r="0.9" fill="#fff" opacity="0.36"/><circle cx="293.4" cy="105.5" r="0.9" fill="#fff" opacity="0.65"/><circle cx="395.7" cy="291.2" r="0.7" fill="#fff" opacity="0.76"/><circle cx="480.5" cy="105.7" r="1.2" fill="#fff" opacity="0.67"/><circle cx="5.1" cy="239.5" r="0.6" fill="#fff" opacity="0.48"/><circle cx="318.7" cy="165.6" r="0.7" fill="#fff" opacity="0.42"/><circle cx="374.5" cy="244.1" r="1.9" fill="#fff" opacity="0.60"/><circle cx="195.0" cy="75.4" r="0.6" fill="#fff" opacity="0.66"/><circle cx="16.3" cy="205.8" r="0.6" fill="#fff" opacity="0.71"/><circle cx="472.3" cy="49.8" r="1.0" fill="#fff" opacity="0.79"/><circle cx="203.9" cy="284.5" r="1.9" fill="#fff" opacity="0.42"/><circle cx="94.8" cy="303.0" r="0.8" fill="#fff" opacity="0.85"/><circle cx="32.9" cy="285.4" r="1.0" fill="#fff" opacity="0.66"/><circle cx="176.8" cy="68.0" r="1.5" fill="#fff" opacity="0.47"/><circle cx="141.8" cy="211.1" r="1.9" fill="#fff" opacity="0.82"/><circle cx="433.5" cy="252.8" r="0.7" fill="#fff" opacity="0.83"/><circle cx="76.9" cy="120.0" r="0.6" fill="#fff" opacity="0.91"/><circle cx="484.3" cy="72.0" r="1.5" fill="#fff" opacity="0.46"/><circle cx="197.0" cy="278.5" r="1.9" fill="#fff" opacity="0.39"/><circle cx="500.8" cy="67.8" r="0.9" fill="#fff" opacity="0.69"/><circle cx="504.2" cy="124.1" r="1.2" fill="#fff" opacity="0.86"/><circle cx="479.6" cy="215.9" r="0.9" fill="#fff" opacity="0.46"/><circle cx="64.9" cy="227.6" r="0.8" fill="#fff" opacity="0.52"/><circle cx="155.8" cy="2.6" r="0.9" fill="#fff" opacity="0.79"/><circle cx="182.7" cy="101.8" r="0.8" fill="#fff" opacity="0.39"/><circle cx="141.6" cy="43.9" r="0.7" fill="#fff" opacity="0.56"/><circle cx="356.7" cy="77.1" r="1.0" fill="#fff" opacity="0.42"/><circle cx="444.5" cy="312.3" r="1.9" fill="#fff" opacity="0.49"/><circle cx="242.1" cy="65.2" r="0.9" fill="#fff" opacity="0.62"/><circle cx="32.5" cy="137.5" r="1.9" fill="#fff" opacity="0.75"/><circle cx="135.7" cy="217.0" r="0.9" fill="#fff" opacity="0.36"/><circle cx="196.8" cy="91.3" r="0.7" fill="#fff" opacity="0.68"/><circle cx="50.4" cy="294.1" r="1.2" fill="#fff" opacity="0.36"/><circle cx="15.3" cy="193.6" r="0.6" fill="#fff" opacity="0.75"/><circle cx="78.9" cy="23.8" r="1.2" fill="#fff" opacity="0.64"/><circle cx="330.5" cy="20.0" r="0.6" fill="#fff" opacity="0.95"/><circle cx="200.3" cy="271.8" r="0.7" fill="#fff" opacity="0.95"/><circle cx="33.7" cy="151.6" r="0.9" fill="#fff" opacity="0.66"/><circle cx="1.8" cy="314.3" r="1.0" fill="#fff" opacity="0.75"/><circle cx="491.7" cy="155.4" r="1.5" fill="#fff" opacity="0.63"/><circle cx="454.2" cy="7.9" r="0.7" fill="#fff" opacity="0.82"/><circle cx="47.8" cy="327.6" r="0.7" fill="#fff" opacity="0.69"/><circle cx="65.8" cy="29.0" r="1.0" fill="#fff" opacity="0.56"/><circle cx="124.7" cy="193.8" r="0.9" fill="#fff" opacity="0.70"/><circle cx="86.3" cy="34.3" r="0.7" fill="#fff" opacity="0.84"/><circle cx="255.4" cy="47.2" r="0.8" fill="#fff" opacity="0.59"/><circle cx="209.6" cy="3.5" r="0.7" fill="#fff" opacity="0.79"/><circle cx="361.3" cy="51.3" r="0.6" fill="#fff" opacity="0.59"/><circle cx="250.2" cy="299.2" r="0.6" fill="#fff" opacity="0.58"/><circle cx="151.8" cy="70.4" r="1.5" fill="#fff" opacity="0.55"/><circle cx="479.8" cy="186.3" r="0.7" fill="#fff" opacity="0.59"/><circle cx="151.8" cy="242.5" r="1.2" fill="#fff" opacity="0.40"/><circle cx="401.4" cy="126.2" r="1.2" fill="#fff" opacity="0.62"/><circle cx="25.1" cy="274.1" r="1.5" fill="#fff" opacity="0.68"/><circle cx="202.7" cy="73.0" r="1.2" fill="#fff" opacity="0.37"/><circle cx="182.3" cy="311.9" r="1.9" fill="#fff" opacity="0.79"/><circle cx="189.3" cy="194.6" r="1.2" fill="#fff" opacity="0.93"/><circle cx="185.4" cy="196.2" r="1.0" fill="#fff" opacity="0.48"/><circle cx="386.7" cy="18.4" r="0.7" fill="#fff" opacity="0.66"/><circle cx="382.2" cy="17.4" r="1.0" fill="#fff" opacity="0.70"/><circle cx="409.5" cy="309.5" r="1.2" fill="#fff" opacity="0.59"/><circle cx="144.9" cy="223.0" r="0.9" fill="#fff" opacity="0.85"/><circle cx="399.7" cy="210.7" r="1.9" fill="#fff" opacity="0.38"/><circle cx="381.6" cy="190.2" r="1.9" fill="#fff" opacity="0.60"/><circle cx="38.0" cy="256.3" r="0.8" fill="#fff" opacity="0.58"/><circle cx="227.0" cy="143.3" r="1.2" fill="#fff" opacity="0.89"/><circle cx="356.4" cy="130.3" r="0.7" fill="#fff" opacity="0.90"/><circle cx="107.1" cy="136.1" r="0.7" fill="#fff" opacity="0.44"/><circle cx="471.7" cy="65.7" r="1.9" fill="#fff" opacity="0.65"/><circle cx="349.6" cy="127.3" r="0.7" fill="#fff" opacity="0.68"/><circle cx="433.5" cy="253.5" r="0.6" fill="#fff" opacity="0.56"/><circle cx="263.6" cy="127.4" r="1.9" fill="#fff" opacity="0.56"/><circle cx="166.3" cy="228.8" r="1.0" fill="#fff" opacity="0.56"/><circle cx="407.0" cy="83.6" r="0.9" fill="#fff" opacity="0.61"/><circle cx="461.2" cy="149.5" r="0.9" fill="#fff" opacity="0.46"/><circle cx="314.3" cy="222.9" r="0.8" fill="#fff" opacity="0.37"/><circle cx="354.1" cy="186.3" r="1.2" fill="#fff" opacity="0.64"/><circle cx="226.5" cy="318.4" r="1.0" fill="#fff" opacity="0.41"/><circle cx="397.5" cy="71.7" r="1.2" fill="#fff" opacity="0.42"/><circle cx="468.4" cy="226.1" r="1.0" fill="#fff" opacity="0.71"/><circle cx="421.2" cy="322.1" r="1.2" fill="#fff" opacity="0.36"/><circle cx="272.4" cy="83.2" r="1.0" fill="#fff" opacity="0.69"/><circle cx="133.1" cy="24.8" r="1.0" fill="#fff" opacity="0.92"/><circle cx="276.0" cy="42.9" r="0.8" fill="#fff" opacity="0.67"/><circle cx="334.6" cy="301.5" r="1.0" fill="#fff" opacity="0.53"/><circle cx="216.6" cy="255.8" r="0.9" fill="#fff" opacity="0.64"/><circle cx="347.9" cy="113.4" r="1.0" fill="#fff" opacity="0.69"/><circle cx="55.9" cy="308.5" r="0.7" fill="#fff" opacity="0.53"/><circle cx="99.0" cy="120.5" r="0.8" fill="#fff" opacity="0.39"/><circle cx="337.8" cy="22.3" r="0.8" fill="#fff" opacity="0.94"/><circle cx="347.4" cy="280.5" r="0.7" fill="#fff" opacity="0.61"/><circle cx="344.5" cy="28.2" r="1.9" fill="#fff" opacity="0.91"/><circle cx="446.0" cy="33.4" r="0.9" fill="#fff" opacity="0.40"/><circle cx="284.7" cy="44.2" r="1.2" fill="#fff" opacity="0.48"/><circle cx="138.2" cy="49.6" r="0.8" fill="#fff" opacity="0.87"/><circle cx="474.0" cy="6.6" r="1.2" fill="#fff" opacity="0.91"/><circle cx="485.3" cy="7.9" r="0.8" fill="#fff" opacity="0.76"/><circle cx="409.6" cy="0.2" r="0.9" fill="#fff" opacity="0.94"/><circle cx="422.5" cy="133.7" r="1.2" fill="#fff" opacity="0.59"/><circle cx="455.5" cy="79.3" r="1.2" fill="#fff" opacity="0.67"/><circle cx="170.0" cy="221.4" r="0.9" fill="#fff" opacity="0.91"/><circle cx="210.0" cy="65.9" r="1.9" fill="#fff" opacity="0.64"/><circle cx="397.3" cy="109.2" r="1.0" fill="#fff" opacity="0.71"/><circle cx="291.2" cy="188.1" r="1.0" fill="#fff" opacity="0.49"/><circle cx="341.8" cy="259.2" r="0.7" fill="#fff" opacity="0.76"/><circle cx="255.3" cy="144.8" r="0.8" fill="#fff" opacity="0.57"/><circle cx="396.6" cy="110.9" r="1.5" fill="#fff" opacity="0.89"/><circle cx="285.1" cy="309.6" r="0.6" fill="#fff" opacity="0.38"/><circle cx="16.7" cy="313.0" r="0.8" fill="#fff" opacity="0.44"/><circle cx="472.3" cy="112.1" r="0.8" fill="#fff" opacity="0.83"/><circle cx="162.0" cy="14.0" r="0.9" fill="#fff" opacity="0.88"/><circle cx="368.3" cy="311.4" r="1.2" fill="#fff" opacity="0.79"/><circle cx="468.3" cy="48.0" r="0.8" fill="#fff" opacity="0.79"/><circle cx="342.9" cy="40.4" r="0.7" fill="#fff" opacity="0.51"/><circle cx="264.6" cy="267.7" r="1.0" fill="#fff" opacity="0.92"/><circle cx="41.3" cy="73.1" r="1.0" fill="#fff" opacity="0.94"/><circle cx="473.6" cy="222.1" r="1.2" fill="#fff" opacity="0.73"/><circle cx="247.6" cy="12.8" r="1.9" fill="#fff" opacity="0.94"/><circle cx="12.4" cy="250.2" r="0.6" fill="#fff" opacity="0.52"/><circle cx="487.3" cy="8.0" r="1.9" fill="#fff" opacity="0.72"/><circle cx="32.0" cy="8.1" r="0.8" fill="#fff" opacity="0.53"/><circle cx="187.3" cy="155.1" r="1.2" fill="#fff" opacity="0.45"/><circle cx="72.8" cy="190.0" r="1.5" fill="#fff" opacity="0.67"/><circle cx="447.2" cy="53.3" r="1.0" fill="#fff" opacity="0.81"/><circle cx="473.5" cy="102.8" r="1.5" fill="#fff" opacity="0.44"/><circle cx="480.4" cy="93.2" r="0.6" fill="#fff" opacity="0.56"/><circle cx="260.7" cy="124.3" r="1.9" fill="#fff" opacity="0.59"/><circle cx="252.4" cy="277.8" r="0.6" fill="#fff" opacity="0.40"/><circle cx="252.2" cy="158.0" r="0.6" fill="#fff" opacity="0.52"/><circle cx="118.9" cy="271.9" r="1.0" fill="#fff" opacity="0.47"/><circle cx="321.0" cy="33.6" r="0.6" fill="#fff" opacity="0.92"/><circle cx="248.4" cy="158.2" r="1.2" fill="#fff" opacity="0.91"/><circle cx="327.8" cy="226.2" r="1.0" fill="#fff" opacity="0.94"/><circle cx="465.0" cy="224.7" r="1.0" fill="#fff" opacity="0.84"/><circle cx="406.2" cy="57.8" r="1.0" fill="#fff" opacity="0.78"/><circle cx="333.6" cy="154.5" r="1.5" fill="#fff" opacity="0.91"/><circle cx="326.6" cy="21.2" r="0.7" fill="#fff" opacity="0.51"/><circle cx="146.0" cy="127.9" r="1.0" fill="#fff" opacity="0.94"/><circle cx="315.8" cy="41.1" r="0.6" fill="#fff" opacity="0.61"/><circle cx="468.7" cy="73.8" r="0.6" fill="#fff" opacity="0.36"/><circle cx="81.6" cy="261.0" r="0.7" fill="#fff" opacity="0.77"/><circle cx="261.5" cy="103.6" r="0.8" fill="#fff" opacity="0.37"/><circle cx="135.3" cy="253.1" r="1.2" fill="#fff" opacity="0.91"/><circle cx="314.0" cy="315.7" r="1.2" fill="#fff" opacity="0.42"/><circle cx="110.3" cy="325.3" r="0.7" fill="#fff" opacity="0.87"/><circle cx="126.6" cy="65.3" r="0.9" fill="#fff" opacity="0.61"/><circle cx="400.4" cy="300.6" r="1.5" fill="#fff" opacity="0.61"/><circle cx="347.6" cy="250.1" r="1.0" fill="#fff" opacity="0.70"/><circle cx="212.8" cy="4.0" r="0.8" fill="#fff" opacity="0.81"/><circle cx="357.9" cy="149.8" r="0.7" fill="#fff" opacity="0.92"/><circle cx="279.0" cy="0.7" r="1.9" fill="#fff" opacity="0.87"/><circle cx="504.6" cy="163.4" r="0.9" fill="#fff" opacity="0.59"/><circle cx="329.4" cy="223.5" r="0.6" fill="#fff" opacity="0.40"/><circle cx="285.9" cy="80.4" r="1.5" fill="#fff" opacity="0.36"/><circle cx="36.9" cy="128.2" r="0.7" fill="#fff" opacity="0.47"/><circle cx="443.0" cy="303.8" r="1.2" fill="#fff" opacity="0.53"/><circle cx="112.0" cy="283.9" r="1.5" fill="#fff" opacity="0.79"/><circle cx="441.0" cy="62.8" r="0.7" fill="#fff" opacity="0.77"/><circle cx="227.3" cy="120.0" r="1.9" fill="#fff" opacity="0.61"/><circle cx="315.4" cy="29.2" r="1.9" fill="#fff" opacity="0.75"/><circle cx="343.7" cy="165.5" r="1.5" fill="#fff" opacity="0.88"/><circle cx="38.0" cy="74.4" r="1.9" fill="#fff" opacity="0.61"/><circle cx="331.3" cy="74.1" r="1.2" fill="#fff" opacity="0.69"/><circle cx="198.4" cy="275.5" r="1.5" fill="#fff" opacity="0.51"/><circle cx="311.1" cy="72.5" r="0.9" fill="#fff" opacity="0.80"/><circle cx="219.9" cy="163.4" r="0.9" fill="#fff" opacity="0.85"/><circle cx="386.2" cy="244.9" r="1.0" fill="#fff" opacity="0.50"/><circle cx="345.3" cy="133.7" r="0.6" fill="#fff" opacity="0.43"/><circle cx="395.8" cy="106.5" r="0.6" fill="#fff" opacity="0.51"/><circle cx="287.5" cy="173.3" r="0.8" fill="#fff" opacity="0.90"/><circle cx="402.3" cy="162.2" r="1.5" fill="#fff" opacity="0.76"/><circle cx="49.7" cy="15.8" r="1.9" fill="#fff" opacity="0.69"/><circle cx="483.4" cy="115.7" r="0.7" fill="#fff" opacity="0.36"/><circle cx="276.8" cy="55.2" r="0.9" fill="#fff" opacity="0.58"/><circle cx="138.7" cy="117.6" r="0.6" fill="#fff" opacity="0.67"/><circle cx="317.6" cy="273.7" r="0.9" fill="#fff" opacity="0.46"/><circle cx="374.7" cy="86.7" r="0.6" fill="#fff" opacity="0.75"/><circle cx="458.5" cy="277.4" r="0.6" fill="#fff" opacity="0.62"/><circle cx="411.8" cy="187.0" r="1.2" fill="#fff" opacity="0.48"/><circle cx="112.9" cy="203.3" r="1.2" fill="#fff" opacity="0.82"/><circle cx="449.6" cy="57.6" r="0.8" fill="#fff" opacity="0.63"/><circle cx="306.5" cy="114.2" r="1.2" fill="#fff" opacity="0.87"/><circle cx="114.8" cy="119.5" r="0.6" fill="#fff" opacity="0.86"/><circle cx="378.0" cy="251.5" r="0.6" fill="#fff" opacity="0.41"/><circle cx="304.3" cy="282.8" r="0.7" fill="#fff" opacity="0.60"/><circle cx="460.8" cy="201.6" r="0.6" fill="#fff" opacity="0.75"/><circle cx="352.6" cy="105.7" r="1.0" fill="#fff" opacity="0.48"/><circle cx="10.4" cy="81.9" r="1.0" fill="#fff" opacity="0.53"/><circle cx="7.6" cy="119.5" r="0.8" fill="#fff" opacity="0.51"/><circle cx="57.3" cy="277.5" r="0.9" fill="#fff" opacity="0.54"/><circle cx="449.8" cy="247.3" r="1.9" fill="#fff" opacity="0.77"/><circle cx="253.7" cy="135.5" r="1.0" fill="#fff" opacity="0.63"/><circle cx="452.5" cy="73.5" r="1.0" fill="#fff" opacity="0.58"/><circle cx="328.5" cy="12.9" r="0.9" fill="#fff" opacity="0.57"/><circle cx="467.9" cy="182.7" r="1.2" fill="#fff" opacity="0.80"/><circle cx="230.5" cy="130.3" r="0.9" fill="#fff" opacity="0.39"/><circle cx="125.2" cy="318.5" r="1.0" fill="#fff" opacity="0.37"/><circle cx="404.9" cy="234.5" r="1.9" fill="#fff" opacity="0.69"/><circle cx="476.2" cy="142.8" r="0.6" fill="#fff" opacity="0.70"/><circle cx="341.8" cy="71.1" r="1.2" fill="#fff" opacity="0.94"/><circle cx="467.3" cy="201.6" r="0.9" fill="#fff" opacity="0.71"/><circle cx="123.1" cy="102.0" r="0.7" fill="#fff" opacity="0.94"/><circle cx="113.5" cy="54.3" r="0.8" fill="#fff" opacity="0.82"/><circle cx="456.9" cy="243.4" r="0.7" fill="#fff" opacity="0.72"/><circle cx="474.2" cy="14.3" r="1.5" fill="#fff" opacity="0.88"/><circle cx="332.9" cy="127.2" r="1.5" fill="#fff" opacity="0.65"/><circle cx="490.9" cy="78.7" r="0.9" fill="#fff" opacity="0.75"/><circle cx="33.4" cy="61.2" r="1.0" fill="#fff" opacity="0.91"/><circle cx="337.3" cy="39.4" r="1.5" fill="#fff" opacity="0.91"/><circle cx="162.2" cy="2.3" r="1.5" fill="#fff" opacity="0.42"/><circle cx="128.5" cy="38.3" r="1.2" fill="#fff" opacity="0.68"/></g></svg><div class="warn">Evaluation Warning : The document was created with Spire.PDF for .NET.</div><div class="pframe"></div><div class="ptitle">New Zealand</div><div class="prule"></div><div class="pital">From Wikipedia, the free encyclopedia</div><div class="pl" style="left:75px;top:118.88px;width:359px;text-align:justify;text-align-last:justify">New Zealand (M&#257;ori: Aotearoa) is an island country located in the southwestern Pacific</div><div class="pl" style="left:75px;top:136.88px;width:359px;text-align:justify;text-align-last:justify">Ocean. The country geographically comprises two main landmasses &ndash; that of the North</div><div class="pl" style="left:75px;top:154.88px;width:359px;text-align:justify;text-align-last:justify">and South Islands &ndash; as well as numerous smaller islands. New Zealand is situated some</div><div class="pl" style="left:75px;top:172.88px;width:359px;text-align:justify;text-align-last:justify">1,500 kilometres (900 mi) east of Australia across the Tasman Sea and roughly 1,000</div><div class="pl" style="left:75px;top:190.88px;width:359px;text-align:justify;text-align-last:justify">kilometres (600 mi) south of the Pacific island nations of New Caledonia, Fiji, and Tonga.</div><div class="pl" style="left:75px;top:208.88px;width:359px;text-align:justify;text-align-last:left">Because of its remoteness, it was one of the last lands to be settled by humans.</div><div class="photo">
<svg width="181" height="100" viewBox="0 0 181 100" style="position:absolute;left:0;top:0">
 <defs>
  <linearGradient id="sky" x1="0" y1="0" x2="0.35" y2="1"><stop offset="0" stop-color="#3566b8"/><stop offset="0.5" stop-color="#4582d0"/><stop offset="1" stop-color="#6aa4e2"/></linearGradient>
  <filter id="bl1" x="-50%" y="-50%" width="200%" height="200%"><feGaussianBlur stdDeviation="1.8"/></filter>
  <filter id="bl2" x="-20%" y="-20%" width="140%" height="140%"><feGaussianBlur stdDeviation="0.45"/></filter>
 </defs>
 <rect width="181" height="100" fill="url(#sky)"/>
 <g filter="url(#bl1)" fill="#eef2f8">
  <ellipse cx="5" cy="11" rx="9" ry="10" opacity="0.95"/>
  <ellipse cx="30" cy="25" rx="14" ry="5.5" opacity="0.9" transform="rotate(10 30 25)"/>
  <ellipse cx="52" cy="30" rx="14" ry="4.5" opacity="0.85" transform="rotate(14 52 30)"/>
  <ellipse cx="72" cy="35" rx="10" ry="3" opacity="0.7" transform="rotate(12 72 35)"/>
  <ellipse cx="76" cy="12" rx="12" ry="3" opacity="0.4" transform="rotate(-10 76 12)"/>
  <ellipse cx="60" cy="18" rx="6" ry="2.5" opacity="0.3"/>
  <ellipse cx="101" cy="20" rx="4" ry="3.5" opacity="0.6"/>
  <ellipse cx="130" cy="21.5" rx="4.5" ry="2.6" opacity="0.6"/>
  <ellipse cx="177" cy="73" rx="5" ry="2.5" opacity="0.9"/>
  <ellipse cx="60" cy="45" rx="8" ry="3" opacity="0.2"/>
 </g>
 <g filter="url(#bl2)">
  <!-- bare tree -->
  <path d="M0 6 Q10 12 18 22 Q26 34 26 48 L22 60 L0 60 Z" fill="#9a9c9a" opacity="0.22"/>
  <g stroke="#6e6a60" stroke-width="0.7" fill="none" opacity="0.75">
   <path d="M6 60 Q8 40 4 20 M10 58 Q14 40 20 28 M14 56 Q20 46 25 40 M4 36 Q0 30 1 18 M8 44 Q14 36 12 24 M18 50 Q24 48 27 52 M6 30 Q10 22 14 18"/>
  </g>
  <!-- green tree -->
  <path d="M0 40 Q10 38 18 48 Q28 58 28 70 Q30 80 26 90 L0 92 Z" fill="#4a7a22"/>
  <path d="M2 54 Q14 52 20 64 Q24 76 14 84 L0 86 Z" fill="#86a83a" opacity="0.75"/>
  <!-- left wing -->
  <path d="M17 64 L24 61.5 L52 61.5 L57 64 Z" fill="#3e3a3a"/>
  <path d="M15 74 L20 63 L54 63 L58 74 Z" fill="#d0642e"/>
  <rect x="14" y="73.5" width="44" height="16" fill="#ebe7de"/>
  <path d="M19 76 V88 M24 76 V88 M30 76 V88 M46 76 V88 M52 76 V88" stroke="#6a625a" stroke-width="0.9"/>
  <circle cx="26.5" cy="58.6" r="2" fill="#c4582a"/>
  <circle cx="34.7" cy="55.6" r="2.1" fill="#c4582a"/>
  <circle cx="39.4" cy="60" r="1.7" fill="#c4582a"/>
  <circle cx="48" cy="57.4" r="2" fill="#c4582a"/>
  <path d="M26.5 60 V63 M48 59 V63" stroke="#5a4a40" stroke-width="0.9"/>
  <path d="M35 57 V90" stroke="#3a3a36" stroke-width="1.1"/>
  <!-- left gable timber -->
  <path d="M51 61.5 L42 74 L58 74 Z" fill="#f0ebe0"/>
  <path d="M51 61.5 L42 74 M51 61.5 L58 74 M46 70 H56" stroke="#5a5048" stroke-width="0.9"/>
  <!-- tower -->
  <path d="M81.4 37 L79.2 46.3 H84.2 Z" fill="#c4582a"/>
  <rect x="79.6" y="46" width="4.4" height="9" fill="#5e5650"/>
  <!-- big roof -->
  <path d="M71.6 55.7 L99.8 50.1 L110 67.7 L80 67.7 Z" fill="#c9561f"/>
  <path d="M68 66 L79 55.7 L80 67.7 Z" fill="#4a3a30"/>
  <!-- right gable -->
  <path d="M99.8 50.1 L91.2 66.8 L110 67.7 Z" fill="#ebe5d8"/>
  <path d="M99.8 50.1 L91.2 66.8 M99.8 50.1 L110 67.7 M95 60 H106" stroke="#4a4038" stroke-width="0.9"/>
  <rect x="91" y="66.8" width="19" height="21" fill="#e2dbcd"/>
  <path d="M95 69 V87 M99 69 V87 M103 69 V87 M107 69 V87" stroke="#5a5048" stroke-width="0.9"/>
  <!-- left lower gable -->
  <path d="M70.7 63.4 L57 75 L86 78 Z" fill="#cf602a"/>
  <path d="M70.7 66.5 L64 75.5 L79 76.5 Z" fill="#eee8dc"/>
  <rect x="57" y="67.7" width="34" height="20" fill="#e6e0d4" style="mix-blend-mode:normal"/>
  <path d="M70.7 63.4 L57 75 L86 78 Z" fill="#cf602a"/>
  <path d="M70.7 66.8 L64.5 75.2 L78.5 76.2 Z" fill="#ece6da"/>
  <path d="M62 78 V87 M68 78 V87 M74 78 V87 M84 70 V87" stroke="#5a5048" stroke-width="0.9"/>
  <path d="M75 73 Q77 78 76 86" stroke="#4a7a2a" stroke-width="2.2" fill="none"/>
  <!-- lower right roofs -->
  <path d="M113 79 L117 71 L140 70 L146 78 L146 90 L113 90 Z" fill="#c24c2a"/>
  <rect x="116" y="78" width="30" height="11" fill="#d8d2c8"/>
  <!-- palms & trees -->
  <path d="M130.5 64 L131 90" stroke="#3a3428" stroke-width="1.5"/>
  <ellipse cx="130.5" cy="61" rx="5" ry="4" fill="#4a5424"/>
  <path d="M130.5 61.0 Q134.7 61.0 138.9 63.0 M130.5 61.0 Q133.9 62.5 138.4 66.1 M130.5 61.0 Q131.8 62.9 134.6 67.7 M130.5 61.0 Q131.1 64.0 133.9 70.1 M130.5 61.0 Q129.0 63.1 129.4 69.1 M130.5 61.0 Q126.9 62.0 124.5 67.7 M130.5 61.0 Q126.4 60.8 122.7 65.6 M130.5 61.0 Q127.0 59.7 123.3 63.3 M130.5 61.0 Q127.0 58.1 122.1 58.2 M130.5 61.0 Q128.7 57.4 124.9 56.1 M130.5 61.0 Q130.8 57.9 129.3 56.4 M130.5 61.0 Q132.8 57.7 133.1 55.3 M130.5 61.0 Q133.1 58.8 134.4 57.3 M130.5 61.0 Q134.6 60.2 138.3 59.4 " stroke="#556226" stroke-width="1.6" fill="none" stroke-linecap="round"/>
  <path d="M130.5 60.0 Q133.4 60.1 136.6 62.7 M130.5 60.0 Q132.1 61.6 135.1 65.9 M130.5 60.0 Q130.0 61.9 131.2 67.3 M130.5 60.0 Q128.9 61.2 128.5 66.3 M130.5 60.0 Q127.6 59.4 124.8 63.4 M130.5 60.0 Q128.7 58.3 126.3 58.9 M130.5 60.0 Q129.8 57.7 128.0 57.3 M130.5 60.0 Q131.7 57.6 131.6 56.3 M130.5 60.0 Q132.6 58.5 133.8 57.7 " stroke="#7a8438" stroke-width="1.6" fill="none" stroke-linecap="round"/>
  <ellipse cx="153" cy="70" rx="5.5" ry="5" fill="#6a6624"/>
  <path d="M153.0 69.0 Q156.0 69.0 159.2 71.4 M153.0 69.0 Q155.8 70.3 159.6 74.0 M153.0 69.0 Q154.0 70.8 156.5 75.6 M153.0 69.0 Q151.7 70.3 151.6 75.4 M153.0 69.0 Q150.2 69.9 148.5 75.3 M153.0 69.0 Q150.0 68.9 147.4 73.4 M153.0 69.0 Q150.4 67.2 147.0 67.9 M153.0 69.0 Q151.9 66.6 149.6 66.1 M153.0 69.0 Q153.1 66.4 151.8 65.5 M153.0 69.0 Q155.4 66.3 156.1 64.4 M153.0 69.0 Q156.4 67.7 159.1 66.7 " stroke="#8a8030" stroke-width="1.6" fill="none" stroke-linecap="round"/>
  <ellipse cx="166" cy="73" rx="7" ry="6" fill="#8c8c88" opacity="0.5"/>
  <rect x="174" y="79" width="7" height="12" fill="#2e3e22"/>
  <rect x="150" y="76" width="24" height="14" fill="#5a5a50"/>
  <!-- flowers -->
  <ellipse cx="112" cy="80" rx="8" ry="9" fill="#f4f2e6"/>
  <path d="M106 78 Q112 74 118 80 M108 84 Q113 82 117 86" stroke="#c8c4b0" stroke-width="0.8" fill="none"/>
  <ellipse cx="95" cy="84" rx="8" ry="4" fill="#f0eee2"/>
  <ellipse cx="126" cy="84" rx="7" ry="4.5" fill="#eceadc"/>
  <ellipse cx="142" cy="83" rx="6" ry="5" fill="#f2f0e4"/>
  <path d="M138 82 Q142 79 146 84" stroke="#c8c4b0" stroke-width="0.7" fill="none"/>
  <ellipse cx="157" cy="81" rx="7" ry="6" fill="#f0eee2"/>
  <path d="M152 80 Q157 76 162 82" stroke="#c8c4b0" stroke-width="0.7" fill="none"/>
  <ellipse cx="172" cy="84" rx="5" ry="4" fill="#ecebe0"/>
  <ellipse cx="60" cy="88" rx="10" ry="2.5" fill="#e8e6de"/>
 </g>
</svg></div><div class="pl" style="left:266px;top:233.38px;width:167px;text-align:justify;text-align-last:justify">During its long isolation, New Zealand</div><div class="pl" style="left:266px;top:251.38px;width:167px;text-align:justify;text-align-last:justify">developed a distinctive biodiversity of</div><div class="pl" style="left:266px;top:269.38px;width:167px;text-align:justify;text-align-last:justify">both animal and plant life. Most notable</div><div class="pl" style="left:266px;top:287.38px;width:167px;text-align:justify;text-align-last:justify">are the large number of unique bird</div><div class="pl" style="left:266px;top:305.38px;width:167px;text-align:justify;text-align-last:justify">species, many of which became extinct</div></div></div>
<!-- panel icons -->
<svg style="left:8px;top:88px" width="42" height="42">
 <path d="M9.6 13.4 H14.4 M9.6 13.4 V31.6 H24.6 V27.6" fill="none" stroke="#3a3a3a" stroke-width="1.3"/>
 <path d="M9.6 13.4 H14.4 V31.6 H9.6 Z" fill="#fff"/>
 <path d="M9.6 13.4 V31.6 H24.6 V27.6 H14.4 V13.4 Z" fill="#fff" stroke="#3a3a3a" stroke-width="1.3"/>
 <path d="M14.6 9.4 H26.4 L29.8 12.8 V27.4 H14.6 Z" fill="#f2f2f2" stroke="#3a3a3a" stroke-width="1.3"/>
 <path d="M26.2 9.6 V13 H29.6" fill="none" stroke="#777" stroke-width="0.9"/>
</svg>
<div class="a" style="left:57px;top:100px;font-weight:bold;font-size:12.4px;color:#1a1a1a;white-space:nowrap;transform:scaleX(0.91);transform-origin:0 0">Page Thumbnails</div>
<div class="a" style="left:179px;top:100px;width:16px;height:16px;border:1.5px solid #5a5a5a;background:#e8e8e8"></div>
<div class="a" style="left:200px;top:100px;width:16px;height:16px;border:1.5px solid #5a5a5a;background:#e8e8e8"></div>
<svg style="left:179px;top:100px" width="40" height="16">
 <path d="M3 8 L7 4 V12 Z M8 8 L12 4 V12 Z" fill="#5a5a5a"/>
 <path d="M27 4 L31 8 L27 12 Z" fill="#5a5a5a"/>
</svg>
<svg style="left:8px;top:131px" width="42" height="90">
 <g transform="translate(19 20.5) rotate(-45) scale(1.22) translate(-18 -20.5)" fill="none" stroke="#7c7c7c" stroke-width="0.95">
  <path d="M13 17 H25.5 A3.5 3.5 0 0 1 25.5 24 H10.5 A3.5 3.5 0 0 1 10.5 17 H12" />
  <path d="M12 18.6 H26 A1.9 1.9 0 0 1 26 22.4 H10.4 A1.9 1.9 0 0 1 10.4 18.6" stroke="#a8a8a8" stroke-width="0.7"/>
  <path d="M27 21.8 H12.5 A1.6 1.6 0 0 1 12.5 18.8 H22" stroke-width="1"/>
 </g>
 <path d="M7.5 67 L19 58.8 L30.5 67 L19 75.2 Z" fill="#c2d5e6" stroke="#6e6e6e" stroke-width="1"/>
 <path d="M7.5 60 L19 52.2 L30.5 60 L19 67.8 Z" fill="#ececec" fill-opacity="0.62" stroke="#6e6e6e" stroke-width="1"/>
</svg>
<svg style="left:52px;top:132px" width="30" height="22">
 <rect x="3.8" y="4.6" width="15" height="14" rx="1.5" fill="#fff" stroke="#444" stroke-width="1.4"/>
 <rect x="4.6" y="5.4" width="13.4" height="2.2" fill="#b0b0b0"/>
 <circle cx="7.4" cy="10.3" r="1.9" fill="#c8c8c8" stroke="#3a3a3a" stroke-width="1.1"/>
 <circle cx="7.4" cy="14.3" r="1.9" fill="#d8d8d8" stroke="#3a3a3a" stroke-width="1.1"/>
 <path d="M11 10.4 H16.8 M11 14.4 H16.8" stroke="#333" stroke-width="1"/>
 <path d="M20.4 10 H27 L23.7 13.6 Z" fill="#444"/>
</svg>
<!-- thumbnails -->
<div class="a" style="left:67px;top:204px;width:137px;height:88px;overflow:hidden;box-shadow:1px 1px 1px rgba(0,0,0,0.35)"><div style="position:absolute;left:0;top:0;width:507px;height:328px;transform:scale(0.2702);transform-origin:0 0"><div class="page" id="pg1t"><div class="pbg"></div><svg width="507" height="328" style="left:0;top:0"><defs><filter id="sbpg1t"><feGaussianBlur stdDeviation="0.35"/></filter></defs><g filter="url(#sbpg1t)"><circle cx="236.1" cy="166.6" r="0.8" fill="#fff" opacity="0.83"/><circle cx="241.2" cy="201.4" r="1.9" fill="#fff" opacity="0.53"/><circle cx="46.0" cy="265.6" r="0.6" fill="#fff" opacity="0.71"/><circle cx="304.0" cy="255.2" r="0.9" fill="#fff" opacity="0.66"/><circle cx="324.6" cy="163.9" r="1.9" fill="#fff" opacity="0.74"/><circle cx="260.0" cy="9.8" r="0.7" fill="#fff" opacity="0.59"/><circle cx="429.6" cy="0.2" r="0.6" fill="#fff" opacity="0.63"/><circle cx="497.0" cy="130.4" r="0.9" fill="#fff" opacity="0.82"/><circle cx="136.8" cy="28.6" r="1.5" fill="#fff" opacity="0.80"/><circle cx="59.8" cy="80.8" r="0.6" fill="#fff" opacity="0.63"/><circle cx="246.8" cy="223.7" r="0.9" fill="#fff" opacity="0.94"/><circle cx="390.1" cy="137.5" r="1.5" fill="#fff" opacity="0.60"/><circle cx="407.3" cy="99.8" r="0.9" fill="#fff" opacity="0.46"/><circle cx="504.9" cy="197.5" r="0.6" fill="#fff" opacity="0.94"/><circle cx="166.8" cy="97.2" r="0.7" fill="#fff" opacity="0.48"/><circle cx="322.7" cy="5.1" r="1.9" fill="#fff" opacity="0.43"/><circle cx="297.7" cy="273.0" r="1.5" fill="#fff" opacity="0.46"/><circle cx="476.8" cy="64.5" r="1.9" fill="#fff" opacity="0.71"/><circle cx="213.7" cy="34.1" r="1.0" fill="#fff" opacity="0.49"/><circle cx="357.2" cy="84.3" r="1.9" fill="#fff" opacity="0.53"/><circle cx="88.9" cy="236.3" r="0.9" fill="#fff" opacity="0.64"/><circle cx="331.3" cy="202.0" r="0.9" fill="#fff" opacity="0.90"/><circle cx="103.4" cy="5.4" r="1.9" fill="#fff" opacity="0.50"/><circle cx="493.3" cy="30.2" r="1.9" fill="#fff" opacity="0.94"/><circle cx="333.1" cy="226.7" r="0.8" fill="#fff" opacity="0.70"/><circle cx="468.3" cy="155.7" r="1.0" fill="#fff" opacity="0.93"/><circle cx="10.8" cy="208.7" r="1.0" fill="#fff" opacity="0.54"/><circle cx="506.7" cy="24.7" r="0.6" fill="#fff" opacity="0.89"/><circle cx="373.7" cy="230.8" r="1.2" fill="#fff" opacity="0.56"/><circle cx="290.4" cy="205.0" r="0.6" fill="#fff" opacity="0.72"/><circle cx="446.1" cy="238.9" r="1.9" fill="#fff" opacity="0.61"/><circle cx="425.1" cy="27.5" r="0.6" fill="#fff" opacity="0.54"/><circle cx="57.2" cy="255.8" r="1.9" fill="#fff" opacity="0.50"/><circle cx="165.8" cy="218.4" r="1.5" fill="#fff" opacity="0.83"/><circle cx="382.6" cy="65.7" r="0.9" fill="#fff" opacity="0.70"/><circle cx="160.5" cy="44.7" r="0.6" fill="#fff" opacity="0.78"/><circle cx="481.7" cy="90.8" r="1.9" fill="#fff" opacity="0.63"/><circle cx="469.3" cy="272.5" r="1.9" fill="#fff" opacity="0.75"/><circle cx="363.2" cy="276.1" r="1.2" fill="#fff" opacity="0.39"/><circle cx="16.0" cy="286.3" r="1.0" fill="#fff" opacity="0.69"/><circle cx="156.7" cy="259.6" r="0.8" fill="#fff" opacity="0.59"/><circle cx="96.3" cy="252.3" r="0.8" fill="#fff" opacity="0.83"/><circle cx="498.9" cy="37.8" r="1.2" fill="#fff" opacity="0.93"/><circle cx="347.0" cy="65.4" r="0.8" fill="#fff" opacity="0.78"/><circle cx="382.8" cy="175.4" r="0.9" fill="#fff" opacity="0.51"/><circle cx="175.3" cy="228.7" r="0.8" fill="#fff" opacity="0.59"/><circle cx="401.5" cy="297.2" r="1.5" fill="#fff" opacity="0.43"/><circle cx="404.0" cy="309.7" r="0.9" fill="#fff" opacity="0.41"/><circle cx="439.1" cy="261.8" r="0.7" fill="#fff" opacity="0.48"/><circle cx="272.2" cy="259.4" r="0.6" fill="#fff" opacity="0.56"/><circle cx="389.5" cy="159.9" r="0.7" fill="#fff" opacity="0.61"/><circle cx="17.8" cy="174.9" r="0.8" fill="#fff" opacity="0.63"/><circle cx="506.9" cy="295.4" r="1.9" fill="#fff" opacity="0.92"/><circle cx="249.7" cy="311.3" r="0.9" fill="#fff" opacity="0.61"/><circle cx="283.3" cy="272.6" r="0.8" fill="#fff" opacity="0.66"/><circle cx="427.7" cy="183.7" r="1.5" fill="#fff" opacity="0.92"/><circle cx="441.1" cy="199.9" r="0.8" fill="#fff" opacity="0.93"/><circle cx="265.8" cy="187.9" r="0.7" fill="#fff" opacity="0.65"/><circle cx="285.4" cy="161.1" r="0.7" fill="#fff" opacity="0.91"/><circle cx="204.9" cy="80.8" r="1.2" fill="#fff" opacity="0.61"/><circle cx="413.6" cy="295.4" r="1.2" fill="#fff" opacity="0.42"/><circle cx="212.7" cy="9.6" r="0.6" fill="#fff" opacity="0.37"/><circle cx="78.9" cy="3.9" r="1.2" fill="#fff" opacity="0.50"/><circle cx="252.9" cy="163.9" r="1.0" fill="#fff" opacity="0.78"/><circle cx="355.6" cy="288.2" r="1.5" fill="#fff" opacity="0.85"/><circle cx="270.7" cy="71.6" r="0.8" fill="#fff" opacity="0.49"/><circle cx="213.8" cy="259.1" r="1.5" fill="#fff" opacity="0.73"/><circle cx="405.0" cy="31.5" r="1.2" fill="#fff" opacity="0.90"/><circle cx="491.0" cy="37.9" r="1.2" fill="#fff" opacity="0.65"/><circle cx="347.6" cy="62.0" r="0.7" fill="#fff" opacity="0.36"/><circle cx="244.0" cy="62.2" r="0.8" fill="#fff" opacity="0.85"/><circle cx="502.1" cy="304.0" r="0.6" fill="#fff" opacity="0.43"/><circle cx="345.2" cy="25.5" r="1.5" fill="#fff" opacity="0.63"/><circle cx="261.3" cy="141.1" r="0.6" fill="#fff" opacity="0.73"/><circle cx="20.7" cy="65.7" r="1.2" fill="#fff" opacity="0.79"/><circle cx="205.5" cy="64.0" r="0.6" fill="#fff" opacity="0.54"/><circle cx="460.7" cy="308.2" r="0.9" fill="#fff" opacity="0.65"/><circle cx="498.2" cy="264.0" r="0.7" fill="#fff" opacity="0.80"/><circle cx="394.4" cy="267.2" r="1.2" fill="#fff" opacity="0.88"/><circle cx="352.3" cy="251.7" r="1.5" fill="#fff" opacity="0.47"/><circle cx="93.7" cy="261.5" r="0.7" fill="#fff" opacity="0.36"/><circle cx="180.3" cy="209.5" r="0.9" fill="#fff" opacity="0.51"/><circle cx="487.4" cy="98.0" r="1.5" fill="#fff" opacity="0.69"/><circle cx="325.6" cy="230.0" r="0.6" fill="#fff" opacity="0.42"/><circle cx="54.8" cy="77.7" r="0.6" fill="#fff" opacity="0.81"/><circle cx="328.5" cy="3.5" r="1.0" fill="#fff" opacity="0.89"/><circle cx="288.0" cy="326.4" r="0.7" fill="#fff" opacity="0.68"/><circle cx="338.9" cy="313.4" r="0.8" fill="#fff" opacity="0.58"/><circle cx="491.8" cy="280.7" r="0.6" fill="#fff" opacity="0.61"/><circle cx="250.7" cy="93.3" r="1.0" fill="#fff" opacity="0.57"/><circle cx="144.9" cy="214.9" r="1.0" fill="#fff" opacity="0.75"/><circle cx="379.1" cy="8.8" r="0.6" fill="#fff" opacity="0.73"/><circle cx="207.3" cy="224.5" r="1.2" fill="#fff" opacity="0.80"/><circle cx="37.3" cy="297.0" r="1.9" fill="#fff" opacity="0.50"/><circle cx="383.0" cy="14.9" r="1.9" fill="#fff" opacity="0.44"/><circle cx="486.7" cy="80.4" r="0.6" fill="#fff" opacity="0.72"/><circle cx="231.0" cy="66.8" r="0.8" fill="#fff" opacity="0.42"/><circle cx="224.5" cy="219.1" r="1.0" fill="#fff" opacity="0.73"/><circle cx="345.8" cy="119.4" r="0.8" fill="#fff" opacity="0.92"/><circle cx="372.3" cy="78.2" r="1.0" fill="#fff" opacity="0.82"/><circle cx="316.9" cy="117.8" r="0.9" fill="#fff" opacity="0.73"/><circle cx="381.9" cy="62.3" r="0.9" fill="#fff" opacity="0.88"/><circle cx="20.0" cy="19.9" r="1.5" fill="#fff" opacity="0.37"/><circle cx="19.3" cy="73.0" r="0.7" fill="#fff" opacity="0.90"/><circle cx="245.4" cy="116.1" r="1.9" fill="#fff" opacity="0.80"/><circle cx="425.1" cy="24.4" r="0.9" fill="#fff" opacity="0.62"/><circle cx="378.9" cy="128.0" r="0.8" fill="#fff" opacity="0.74"/><circle cx="501.5" cy="106.7" r="0.8" fill="#fff" opacity="0.61"/><circle cx="245.8" cy="224.8" r="0.6" fill="#fff" opacity="0.40"/><circle cx="108.1" cy="217.2" r="1.0" fill="#fff" opacity="0.65"/><circle cx="110.9" cy="215.6" r="0.7" fill="#fff" opacity="0.54"/><circle cx="348.3" cy="91.6" r="1.0" fill="#fff" opacity="0.62"/><circle cx="112.2" cy="317.4" r="0.9" fill="#fff" opacity="0.40"/><circle cx="420.1" cy="7.9" r="1.5" fill="#fff" opacity="0.83"/><circle cx="374.6" cy="120.8" r="0.8" fill="#fff" opacity="0.85"/><circle cx="285.3" cy="57.9" r="1.0" fill="#fff" opacity="0.84"/><circle cx="112.2" cy="18.9" r="1.0" fill="#fff" opacity="0.93"/><circle cx="330.2" cy="263.8" r="1.0" fill="#fff" opacity="0.82"/><circle cx="455.8" cy="27.8" r="0.8" fill="#fff" opacity="0.41"/><circle cx="413.8" cy="138.4" r="1.9" fill="#fff" opacity="0.81"/><circle cx="264.4" cy="250.8" r="1.2" fill="#fff" opacity="0.83"/><circle cx="168.8" cy="44.8" r="0.7" fill="#fff" opacity="0.77"/><circle cx="463.9" cy="134.7" r="1.2" fill="#fff" opacity="0.86"/><circle cx="408.6" cy="273.5" r="0.6" fill="#fff" opacity="0.66"/><circle cx="360.0" cy="263.1" r="1.5" fill="#fff" opacity="0.90"/><circle cx="346.8" cy="105.2" r="1.0" fill="#fff" opacity="0.51"/><circle cx="449.2" cy="154.6" r="1.0" fill="#fff" opacity="0.74"/><circle cx="393.4" cy="58.9" r="1.9" fill="#fff" opacity="0.36"/><circle cx="243.9" cy="262.5" r="0.9" fill="#fff" opacity="0.46"/><circle cx="301.6" cy="73.5" r="1.0" fill="#fff" opacity="0.59"/><circle cx="461.7" cy="307.5" r="1.9" fill="#fff" opacity="0.86"/><circle cx="334.7" cy="253.1" r="0.9" fill="#fff" opacity="0.59"/><circle cx="494.8" cy="260.7" r="0.6" fill="#fff" opacity="0.74"/><circle cx="120.5" cy="3.6" r="1.2" fill="#fff" opacity="0.62"/><circle cx="210.8" cy="253.2" r="0.8" fill="#fff" opacity="0.73"/><circle cx="503.5" cy="87.4" r="0.8" fill="#fff" opacity="0.69"/><circle cx="75.6" cy="42.1" r="0.7" fill="#fff" opacity="0.88"/><circle cx="351.7" cy="27.2" r="1.0" fill="#fff" opacity="0.36"/><circle cx="396.2" cy="144.4" r="1.5" fill="#fff" opacity="0.67"/><circle cx="79.9" cy="272.9" r="1.0" fill="#fff" opacity="0.59"/><circle cx="282.1" cy="327.1" r="0.7" fill="#fff" opacity="0.57"/><circle cx="348.4" cy="34.7" r="1.9" fill="#fff" opacity="0.80"/><circle cx="397.7" cy="40.0" r="1.5" fill="#fff" opacity="0.78"/><circle cx="241.0" cy="96.3" r="0.6" fill="#fff" opacity="0.86"/><circle cx="428.2" cy="235.9" r="0.8" fill="#fff" opacity="0.52"/><circle cx="190.6" cy="177.0" r="1.2" fill="#fff" opacity="0.80"/><circle cx="281.7" cy="28.5" r="1.5" fill="#fff" opacity="0.79"/><circle cx="167.0" cy="310.0" r="1.2" fill="#fff" opacity="0.62"/><circle cx="193.9" cy="33.4" r="0.8" fill="#fff" opacity="0.76"/><circle cx="359.1" cy="59.0" r="1.9" fill="#fff" opacity="0.71"/><circle cx="45.7" cy="74.3" r="0.7" fill="#fff" opacity="0.61"/><circle cx="391.0" cy="112.1" r="0.8" fill="#fff" opacity="0.74"/><circle cx="388.8" cy="269.3" r="1.2" fill="#fff" opacity="0.90"/><circle cx="315.9" cy="238.4" r="1.2" fill="#fff" opacity="0.94"/><circle cx="400.4" cy="216.6" r="0.6" fill="#fff" opacity="0.51"/><circle cx="95.7" cy="100.6" r="1.5" fill="#fff" opacity="0.47"/><circle cx="168.7" cy="96.3" r="0.8" fill="#fff" opacity="0.50"/><circle cx="273.2" cy="97.9" r="0.8" fill="#fff" opacity="0.69"/><circle cx="358.4" cy="307.0" r="0.6" fill="#fff" opacity="0.73"/><circle cx="100.3" cy="27.3" r="1.5" fill="#fff" opacity="0.77"/><circle cx="166.9" cy="304.7" r="1.9" fill="#fff" opacity="0.88"/><circle cx="229.3" cy="239.4" r="0.7" fill="#fff" opacity="0.69"/><circle cx="414.5" cy="197.3" r="0.6" fill="#fff" opacity="0.52"/><circle cx="454.8" cy="79.0" r="0.8" fill="#fff" opacity="0.46"/><circle cx="277.8" cy="25.0" r="0.8" fill="#fff" opacity="0.82"/><circle cx="471.5" cy="327.6" r="1.5" fill="#fff" opacity="0.72"/><circle cx="324.6" cy="250.4" r="1.5" fill="#fff" opacity="0.63"/><circle cx="88.1" cy="170.5" r="1.2" fill="#fff" opacity="0.38"/><circle cx="397.5" cy="236.7" r="1.5" fill="#fff" opacity="0.93"/><circle cx="304.2" cy="154.1" r="1.5" fill="#fff" opacity="0.80"/><circle cx="433.5" cy="134.2" r="0.7" fill="#fff" opacity="0.89"/><circle cx="266.7" cy="172.2" r="0.6" fill="#fff" opacity="0.54"/><circle cx="371.1" cy="196.0" r="1.0" fill="#fff" opacity="0.88"/><circle cx="444.7" cy="80.1" r="0.9" fill="#fff" opacity="0.65"/><circle cx="266.8" cy="78.4" r="1.5" fill="#fff" opacity="0.91"/><circle cx="446.0" cy="327.8" r="1.2" fill="#fff" opacity="0.87"/><circle cx="213.7" cy="264.1" r="1.5" fill="#fff" opacity="0.69"/><circle cx="458.0" cy="32.3" r="0.7" fill="#fff" opacity="0.88"/><circle cx="292.0" cy="148.6" r="1.0" fill="#fff" opacity="0.36"/><circle cx="87.2" cy="144.6" r="1.5" fill="#fff" opacity="0.43"/><circle cx="351.0" cy="75.7" r="1.9" fill="#fff" opacity="0.89"/><circle cx="495.5" cy="155.0" r="1.0" fill="#fff" opacity="0.87"/><circle cx="351.1" cy="19.3" r="1.2" fill="#fff" opacity="0.89"/><circle cx="8.1" cy="208.4" r="0.9" fill="#fff" opacity="0.67"/><circle cx="487.4" cy="89.8" r="0.8" fill="#fff" opacity="0.55"/><circle cx="485.2" cy="255.5" r="0.8" fill="#fff" opacity="0.48"/><circle cx="155.7" cy="233.1" r="0.8" fill="#fff" opacity="0.78"/><circle cx="254.2" cy="96.9" r="0.7" fill="#fff" opacity="0.70"/><circle cx="338.2" cy="90.8" r="0.7" fill="#fff" opacity="0.63"/><circle cx="38.7" cy="300.8" r="0.6" fill="#fff" opacity="0.35"/><circle cx="297.4" cy="176.2" r="0.7" fill="#fff" opacity="0.45"/><circle cx="501.1" cy="62.2" r="0.6" fill="#fff" opacity="0.46"/><circle cx="454.8" cy="324.0" r="1.9" fill="#fff" opacity="0.90"/><circle cx="461.2" cy="105.2" r="0.6" fill="#fff" opacity="0.66"/><circle cx="256.4" cy="277.3" r="0.8" fill="#fff" opacity="0.71"/><circle cx="391.0" cy="36.8" r="1.9" fill="#fff" opacity="0.68"/><circle cx="305.9" cy="85.7" r="0.6" fill="#fff" opacity="0.69"/><circle cx="442.6" cy="59.1" r="0.6" fill="#fff" opacity="0.72"/><circle cx="408.7" cy="165.2" r="0.6" fill="#fff" opacity="0.39"/><circle cx="460.0" cy="186.6" r="0.9" fill="#fff" opacity="0.72"/><circle cx="415.6" cy="242.2" r="1.9" fill="#fff" opacity="0.40"/><circle cx="416.0" cy="56.3" r="0.8" fill="#fff" opacity="0.65"/><circle cx="334.1" cy="195.5" r="1.2" fill="#fff" opacity="0.60"/><circle cx="21.4" cy="160.6" r="0.8" fill="#fff" opacity="0.44"/><circle cx="230.8" cy="244.3" r="0.9" fill="#fff" opacity="0.60"/><circle cx="266.5" cy="30.0" r="1.9" fill="#fff" opacity="0.60"/><circle cx="387.0" cy="240.8" r="1.0" fill="#fff" opacity="0.42"/><circle cx="433.7" cy="137.2" r="0.9" fill="#fff" opacity="0.57"/><circle cx="170.9" cy="321.8" r="0.6" fill="#fff" opacity="0.45"/><circle cx="296.7" cy="326.3" r="0.8" fill="#fff" opacity="0.63"/><circle cx="199.2" cy="276.5" r="0.6" fill="#fff" opacity="0.48"/><circle cx="176.1" cy="60.2" r="0.8" fill="#fff" opacity="0.64"/><circle cx="239.6" cy="160.8" r="0.8" fill="#fff" opacity="0.87"/><circle cx="103.7" cy="125.6" r="1.0" fill="#fff" opacity="0.57"/><circle cx="139.2" cy="6.1" r="1.0" fill="#fff" opacity="0.66"/><circle cx="287.7" cy="213.0" r="0.7" fill="#fff" opacity="0.57"/><circle cx="77.8" cy="307.2" r="0.9" fill="#fff" opacity="0.78"/><circle cx="459.9" cy="6.7" r="1.5" fill="#fff" opacity="0.62"/><circle cx="433.3" cy="125.1" r="0.6" fill="#fff" opacity="0.53"/><circle cx="308.2" cy="160.2" r="0.8" fill="#fff" opacity="0.37"/><circle cx="158.3" cy="139.1" r="0.8" fill="#fff" opacity="0.66"/><circle cx="277.9" cy="102.9" r="1.5" fill="#fff" opacity="0.44"/><circle cx="114.6" cy="95.8" r="0.9" fill="#fff" opacity="0.43"/><circle cx="430.0" cy="245.0" r="0.6" fill="#fff" opacity="0.84"/><circle cx="494.6" cy="97.8" r="0.9" fill="#fff" opacity="0.68"/><circle cx="189.7" cy="256.9" r="1.5" fill="#fff" opacity="0.42"/><circle cx="144.3" cy="230.7" r="1.5" fill="#fff" opacity="0.47"/><circle cx="389.5" cy="115.0" r="0.7" fill="#fff" opacity="0.80"/><circle cx="460.1" cy="263.8" r="1.0" fill="#fff" opacity="0.77"/><circle cx="280.5" cy="229.7" r="1.5" fill="#fff" opacity="0.42"/><circle cx="461.2" cy="299.3" r="1.5" fill="#fff" opacity="0.65"/><circle cx="297.0" cy="153.8" r="1.0" fill="#fff" opacity="0.39"/><circle cx="17.9" cy="106.1" r="1.0" fill="#fff" opacity="0.51"/><circle cx="338.7" cy="61.0" r="1.2" fill="#fff" opacity="0.92"/><circle cx="391.1" cy="205.8" r="1.5" fill="#fff" opacity="0.72"/><circle cx="32.3" cy="22.4" r="1.9" fill="#fff" opacity="0.58"/><circle cx="461.2" cy="12.5" r="1.0" fill="#fff" opacity="0.54"/><circle cx="182.7" cy="320.4" r="0.9" fill="#fff" opacity="0.51"/><circle cx="130.9" cy="72.2" r="1.5" fill="#fff" opacity="0.35"/><circle cx="350.4" cy="261.3" r="0.7" fill="#fff" opacity="0.88"/><circle cx="348.1" cy="316.2" r="0.8" fill="#fff" opacity="0.55"/><circle cx="349.5" cy="264.0" r="1.5" fill="#fff" opacity="0.52"/><circle cx="379.7" cy="175.1" r="0.9" fill="#fff" opacity="0.57"/><circle cx="358.0" cy="300.9" r="0.7" fill="#fff" opacity="0.94"/><circle cx="414.6" cy="290.5" r="1.9" fill="#fff" opacity="0.66"/><circle cx="344.4" cy="13.2" r="1.5" fill="#fff" opacity="0.87"/><circle cx="403.8" cy="128.7" r="1.0" fill="#fff" opacity="0.57"/><circle cx="103.9" cy="184.9" r="1.5" fill="#fff" opacity="0.73"/><circle cx="63.7" cy="242.8" r="0.8" fill="#fff" opacity="0.43"/><circle cx="191.1" cy="219.6" r="0.8" fill="#fff" opacity="0.93"/><circle cx="470.3" cy="87.9" r="1.0" fill="#fff" opacity="0.73"/><circle cx="24.7" cy="234.0" r="0.6" fill="#fff" opacity="0.47"/><circle cx="433.8" cy="56.2" r="1.9" fill="#fff" opacity="0.83"/><circle cx="425.2" cy="93.1" r="1.5" fill="#fff" opacity="0.81"/><circle cx="497.4" cy="127.7" r="1.0" fill="#fff" opacity="0.83"/><circle cx="74.5" cy="57.4" r="1.0" fill="#fff" opacity="0.88"/><circle cx="137.0" cy="186.6" r="1.5" fill="#fff" opacity="0.51"/><circle cx="115.4" cy="158.2" r="1.0" fill="#fff" opacity="0.69"/><circle cx="339.8" cy="1.3" r="0.8" fill="#fff" opacity="0.95"/><circle cx="102.5" cy="284.5" r="1.5" fill="#fff" opacity="0.56"/><circle cx="283.8" cy="182.8" r="1.0" fill="#fff" opacity="0.52"/><circle cx="89.2" cy="8.8" r="0.7" fill="#fff" opacity="0.75"/><circle cx="137.4" cy="7.9" r="0.7" fill="#fff" opacity="0.66"/><circle cx="401.7" cy="241.2" r="0.7" fill="#fff" opacity="0.91"/><circle cx="244.4" cy="275.5" r="0.6" fill="#fff" opacity="0.36"/><circle cx="317.8" cy="147.5" r="0.7" fill="#fff" opacity="0.89"/><circle cx="163.1" cy="30.9" r="0.8" fill="#fff" opacity="0.48"/><circle cx="376.8" cy="179.2" r="0.8" fill="#fff" opacity="0.56"/><circle cx="78.9" cy="122.3" r="0.6" fill="#fff" opacity="0.36"/><circle cx="254.8" cy="132.3" r="0.9" fill="#fff" opacity="0.36"/><circle cx="293.4" cy="105.5" r="0.9" fill="#fff" opacity="0.65"/><circle cx="395.7" cy="291.2" r="0.7" fill="#fff" opacity="0.76"/><circle cx="480.5" cy="105.7" r="1.2" fill="#fff" opacity="0.67"/><circle cx="5.1" cy="239.5" r="0.6" fill="#fff" opacity="0.48"/><circle cx="318.7" cy="165.6" r="0.7" fill="#fff" opacity="0.42"/><circle cx="374.5" cy="244.1" r="1.9" fill="#fff" opacity="0.60"/><circle cx="195.0" cy="75.4" r="0.6" fill="#fff" opacity="0.66"/><circle cx="16.3" cy="205.8" r="0.6" fill="#fff" opacity="0.71"/><circle cx="472.3" cy="49.8" r="1.0" fill="#fff" opacity="0.79"/><circle cx="203.9" cy="284.5" r="1.9" fill="#fff" opacity="0.42"/><circle cx="94.8" cy="303.0" r="0.8" fill="#fff" opacity="0.85"/><circle cx="32.9" cy="285.4" r="1.0" fill="#fff" opacity="0.66"/><circle cx="176.8" cy="68.0" r="1.5" fill="#fff" opacity="0.47"/><circle cx="141.8" cy="211.1" r="1.9" fill="#fff" opacity="0.82"/><circle cx="433.5" cy="252.8" r="0.7" fill="#fff" opacity="0.83"/><circle cx="76.9" cy="120.0" r="0.6" fill="#fff" opacity="0.91"/><circle cx="484.3" cy="72.0" r="1.5" fill="#fff" opacity="0.46"/><circle cx="197.0" cy="278.5" r="1.9" fill="#fff" opacity="0.39"/><circle cx="500.8" cy="67.8" r="0.9" fill="#fff" opacity="0.69"/><circle cx="504.2" cy="124.1" r="1.2" fill="#fff" opacity="0.86"/><circle cx="479.6" cy="215.9" r="0.9" fill="#fff" opacity="0.46"/><circle cx="64.9" cy="227.6" r="0.8" fill="#fff" opacity="0.52"/><circle cx="155.8" cy="2.6" r="0.9" fill="#fff" opacity="0.79"/><circle cx="182.7" cy="101.8" r="0.8" fill="#fff" opacity="0.39"/><circle cx="141.6" cy="43.9" r="0.7" fill="#fff" opacity="0.56"/><circle cx="356.7" cy="77.1" r="1.0" fill="#fff" opacity="0.42"/><circle cx="444.5" cy="312.3" r="1.9" fill="#fff" opacity="0.49"/><circle cx="242.1" cy="65.2" r="0.9" fill="#fff" opacity="0.62"/><circle cx="32.5" cy="137.5" r="1.9" fill="#fff" opacity="0.75"/><circle cx="135.7" cy="217.0" r="0.9" fill="#fff" opacity="0.36"/><circle cx="196.8" cy="91.3" r="0.7" fill="#fff" opacity="0.68"/><circle cx="50.4" cy="294.1" r="1.2" fill="#fff" opacity="0.36"/><circle cx="15.3" cy="193.6" r="0.6" fill="#fff" opacity="0.75"/><circle cx="78.9" cy="23.8" r="1.2" fill="#fff" opacity="0.64"/><circle cx="330.5" cy="20.0" r="0.6" fill="#fff" opacity="0.95"/><circle cx="200.3" cy="271.8" r="0.7" fill="#fff" opacity="0.95"/><circle cx="33.7" cy="151.6" r="0.9" fill="#fff" opacity="0.66"/><circle cx="1.8" cy="314.3" r="1.0" fill="#fff" opacity="0.75"/><circle cx="491.7" cy="155.4" r="1.5" fill="#fff" opacity="0.63"/><circle cx="454.2" cy="7.9" r="0.7" fill="#fff" opacity="0.82"/><circle cx="47.8" cy="327.6" r="0.7" fill="#fff" opacity="0.69"/><circle cx="65.8" cy="29.0" r="1.0" fill="#fff" opacity="0.56"/><circle cx="124.7" cy="193.8" r="0.9" fill="#fff" opacity="0.70"/><circle cx="86.3" cy="34.3" r="0.7" fill="#fff" opacity="0.84"/><circle cx="255.4" cy="47.2" r="0.8" fill="#fff" opacity="0.59"/><circle cx="209.6" cy="3.5" r="0.7" fill="#fff" opacity="0.79"/><circle cx="361.3" cy="51.3" r="0.6" fill="#fff" opacity="0.59"/><circle cx="250.2" cy="299.2" r="0.6" fill="#fff" opacity="0.58"/><circle cx="151.8" cy="70.4" r="1.5" fill="#fff" opacity="0.55"/><circle cx="479.8" cy="186.3" r="0.7" fill="#fff" opacity="0.59"/><circle cx="151.8" cy="242.5" r="1.2" fill="#fff" opacity="0.40"/><circle cx="401.4" cy="126.2" r="1.2" fill="#fff" opacity="0.62"/><circle cx="25.1" cy="274.1" r="1.5" fill="#fff" opacity="0.68"/><circle cx="202.7" cy="73.0" r="1.2" fill="#fff" opacity="0.37"/><circle cx="182.3" cy="311.9" r="1.9" fill="#fff" opacity="0.79"/><circle cx="189.3" cy="194.6" r="1.2" fill="#fff" opacity="0.93"/><circle cx="185.4" cy="196.2" r="1.0" fill="#fff" opacity="0.48"/><circle cx="386.7" cy="18.4" r="0.7" fill="#fff" opacity="0.66"/><circle cx="382.2" cy="17.4" r="1.0" fill="#fff" opacity="0.70"/><circle cx="409.5" cy="309.5" r="1.2" fill="#fff" opacity="0.59"/><circle cx="144.9" cy="223.0" r="0.9" fill="#fff" opacity="0.85"/><circle cx="399.7" cy="210.7" r="1.9" fill="#fff" opacity="0.38"/><circle cx="381.6" cy="190.2" r="1.9" fill="#fff" opacity="0.60"/><circle cx="38.0" cy="256.3" r="0.8" fill="#fff" opacity="0.58"/><circle cx="227.0" cy="143.3" r="1.2" fill="#fff" opacity="0.89"/><circle cx="356.4" cy="130.3" r="0.7" fill="#fff" opacity="0.90"/><circle cx="107.1" cy="136.1" r="0.7" fill="#fff" opacity="0.44"/><circle cx="471.7" cy="65.7" r="1.9" fill="#fff" opacity="0.65"/><circle cx="349.6" cy="127.3" r="0.7" fill="#fff" opacity="0.68"/><circle cx="433.5" cy="253.5" r="0.6" fill="#fff" opacity="0.56"/><circle cx="263.6" cy="127.4" r="1.9" fill="#fff" opacity="0.56"/><circle cx="166.3" cy="228.8" r="1.0" fill="#fff" opacity="0.56"/><circle cx="407.0" cy="83.6" r="0.9" fill="#fff" opacity="0.61"/><circle cx="461.2" cy="149.5" r="0.9" fill="#fff" opacity="0.46"/><circle cx="314.3" cy="222.9" r="0.8" fill="#fff" opacity="0.37"/><circle cx="354.1" cy="186.3" r="1.2" fill="#fff" opacity="0.64"/><circle cx="226.5" cy="318.4" r="1.0" fill="#fff" opacity="0.41"/><circle cx="397.5" cy="71.7" r="1.2" fill="#fff" opacity="0.42"/><circle cx="468.4" cy="226.1" r="1.0" fill="#fff" opacity="0.71"/><circle cx="421.2" cy="322.1" r="1.2" fill="#fff" opacity="0.36"/><circle cx="272.4" cy="83.2" r="1.0" fill="#fff" opacity="0.69"/><circle cx="133.1" cy="24.8" r="1.0" fill="#fff" opacity="0.92"/><circle cx="276.0" cy="42.9" r="0.8" fill="#fff" opacity="0.67"/><circle cx="334.6" cy="301.5" r="1.0" fill="#fff" opacity="0.53"/><circle cx="216.6" cy="255.8" r="0.9" fill="#fff" opacity="0.64"/><circle cx="347.9" cy="113.4" r="1.0" fill="#fff" opacity="0.69"/><circle cx="55.9" cy="308.5" r="0.7" fill="#fff" opacity="0.53"/><circle cx="99.0" cy="120.5" r="0.8" fill="#fff" opacity="0.39"/><circle cx="337.8" cy="22.3" r="0.8" fill="#fff" opacity="0.94"/><circle cx="347.4" cy="280.5" r="0.7" fill="#fff" opacity="0.61"/><circle cx="344.5" cy="28.2" r="1.9" fill="#fff" opacity="0.91"/><circle cx="446.0" cy="33.4" r="0.9" fill="#fff" opacity="0.40"/><circle cx="284.7" cy="44.2" r="1.2" fill="#fff" opacity="0.48"/><circle cx="138.2" cy="49.6" r="0.8" fill="#fff" opacity="0.87"/><circle cx="474.0" cy="6.6" r="1.2" fill="#fff" opacity="0.91"/><circle cx="485.3" cy="7.9" r="0.8" fill="#fff" opacity="0.76"/><circle cx="409.6" cy="0.2" r="0.9" fill="#fff" opacity="0.94"/><circle cx="422.5" cy="133.7" r="1.2" fill="#fff" opacity="0.59"/><circle cx="455.5" cy="79.3" r="1.2" fill="#fff" opacity="0.67"/><circle cx="170.0" cy="221.4" r="0.9" fill="#fff" opacity="0.91"/><circle cx="210.0" cy="65.9" r="1.9" fill="#fff" opacity="0.64"/><circle cx="397.3" cy="109.2" r="1.0" fill="#fff" opacity="0.71"/><circle cx="291.2" cy="188.1" r="1.0" fill="#fff" opacity="0.49"/><circle cx="341.8" cy="259.2" r="0.7" fill="#fff" opacity="0.76"/><circle cx="255.3" cy="144.8" r="0.8" fill="#fff" opacity="0.57"/><circle cx="396.6" cy="110.9" r="1.5" fill="#fff" opacity="0.89"/><circle cx="285.1" cy="309.6" r="0.6" fill="#fff" opacity="0.38"/><circle cx="16.7" cy="313.0" r="0.8" fill="#fff" opacity="0.44"/><circle cx="472.3" cy="112.1" r="0.8" fill="#fff" opacity="0.83"/><circle cx="162.0" cy="14.0" r="0.9" fill="#fff" opacity="0.88"/><circle cx="368.3" cy="311.4" r="1.2" fill="#fff" opacity="0.79"/><circle cx="468.3" cy="48.0" r="0.8" fill="#fff" opacity="0.79"/><circle cx="342.9" cy="40.4" r="0.7" fill="#fff" opacity="0.51"/><circle cx="264.6" cy="267.7" r="1.0" fill="#fff" opacity="0.92"/><circle cx="41.3" cy="73.1" r="1.0" fill="#fff" opacity="0.94"/><circle cx="473.6" cy="222.1" r="1.2" fill="#fff" opacity="0.73"/><circle cx="247.6" cy="12.8" r="1.9" fill="#fff" opacity="0.94"/><circle cx="12.4" cy="250.2" r="0.6" fill="#fff" opacity="0.52"/><circle cx="487.3" cy="8.0" r="1.9" fill="#fff" opacity="0.72"/><circle cx="32.0" cy="8.1" r="0.8" fill="#fff" opacity="0.53"/><circle cx="187.3" cy="155.1" r="1.2" fill="#fff" opacity="0.45"/><circle cx="72.8" cy="190.0" r="1.5" fill="#fff" opacity="0.67"/><circle cx="447.2" cy="53.3" r="1.0" fill="#fff" opacity="0.81"/><circle cx="473.5" cy="102.8" r="1.5" fill="#fff" opacity="0.44"/><circle cx="480.4" cy="93.2" r="0.6" fill="#fff" opacity="0.56"/><circle cx="260.7" cy="124.3" r="1.9" fill="#fff" opacity="0.59"/><circle cx="252.4" cy="277.8" r="0.6" fill="#fff" opacity="0.40"/><circle cx="252.2" cy="158.0" r="0.6" fill="#fff" opacity="0.52"/><circle cx="118.9" cy="271.9" r="1.0" fill="#fff" opacity="0.47"/><circle cx="321.0" cy="33.6" r="0.6" fill="#fff" opacity="0.92"/><circle cx="248.4" cy="158.2" r="1.2" fill="#fff" opacity="0.91"/><circle cx="327.8" cy="226.2" r="1.0" fill="#fff" opacity="0.94"/><circle cx="465.0" cy="224.7" r="1.0" fill="#fff" opacity="0.84"/><circle cx="406.2" cy="57.8" r="1.0" fill="#fff" opacity="0.78"/><circle cx="333.6" cy="154.5" r="1.5" fill="#fff" opacity="0.91"/><circle cx="326.6" cy="21.2" r="0.7" fill="#fff" opacity="0.51"/><circle cx="146.0" cy="127.9" r="1.0" fill="#fff" opacity="0.94"/><circle cx="315.8" cy="41.1" r="0.6" fill="#fff" opacity="0.61"/><circle cx="468.7" cy="73.8" r="0.6" fill="#fff" opacity="0.36"/><circle cx="81.6" cy="261.0" r="0.7" fill="#fff" opacity="0.77"/><circle cx="261.5" cy="103.6" r="0.8" fill="#fff" opacity="0.37"/><circle cx="135.3" cy="253.1" r="1.2" fill="#fff" opacity="0.91"/><circle cx="314.0" cy="315.7" r="1.2" fill="#fff" opacity="0.42"/><circle cx="110.3" cy="325.3" r="0.7" fill="#fff" opacity="0.87"/><circle cx="126.6" cy="65.3" r="0.9" fill="#fff" opacity="0.61"/><circle cx="400.4" cy="300.6" r="1.5" fill="#fff" opacity="0.61"/><circle cx="347.6" cy="250.1" r="1.0" fill="#fff" opacity="0.70"/><circle cx="212.8" cy="4.0" r="0.8" fill="#fff" opacity="0.81"/><circle cx="357.9" cy="149.8" r="0.7" fill="#fff" opacity="0.92"/><circle cx="279.0" cy="0.7" r="1.9" fill="#fff" opacity="0.87"/><circle cx="504.6" cy="163.4" r="0.9" fill="#fff" opacity="0.59"/><circle cx="329.4" cy="223.5" r="0.6" fill="#fff" opacity="0.40"/><circle cx="285.9" cy="80.4" r="1.5" fill="#fff" opacity="0.36"/><circle cx="36.9" cy="128.2" r="0.7" fill="#fff" opacity="0.47"/><circle cx="443.0" cy="303.8" r="1.2" fill="#fff" opacity="0.53"/><circle cx="112.0" cy="283.9" r="1.5" fill="#fff" opacity="0.79"/><circle cx="441.0" cy="62.8" r="0.7" fill="#fff" opacity="0.77"/><circle cx="227.3" cy="120.0" r="1.9" fill="#fff" opacity="0.61"/><circle cx="315.4" cy="29.2" r="1.9" fill="#fff" opacity="0.75"/><circle cx="343.7" cy="165.5" r="1.5" fill="#fff" opacity="0.88"/><circle cx="38.0" cy="74.4" r="1.9" fill="#fff" opacity="0.61"/><circle cx="331.3" cy="74.1" r="1.2" fill="#fff" opacity="0.69"/><circle cx="198.4" cy="275.5" r="1.5" fill="#fff" opacity="0.51"/><circle cx="311.1" cy="72.5" r="0.9" fill="#fff" opacity="0.80"/><circle cx="219.9" cy="163.4" r="0.9" fill="#fff" opacity="0.85"/><circle cx="386.2" cy="244.9" r="1.0" fill="#fff" opacity="0.50"/><circle cx="345.3" cy="133.7" r="0.6" fill="#fff" opacity="0.43"/><circle cx="395.8" cy="106.5" r="0.6" fill="#fff" opacity="0.51"/><circle cx="287.5" cy="173.3" r="0.8" fill="#fff" opacity="0.90"/><circle cx="402.3" cy="162.2" r="1.5" fill="#fff" opacity="0.76"/><circle cx="49.7" cy="15.8" r="1.9" fill="#fff" opacity="0.69"/><circle cx="483.4" cy="115.7" r="0.7" fill="#fff" opacity="0.36"/><circle cx="276.8" cy="55.2" r="0.9" fill="#fff" opacity="0.58"/><circle cx="138.7" cy="117.6" r="0.6" fill="#fff" opacity="0.67"/><circle cx="317.6" cy="273.7" r="0.9" fill="#fff" opacity="0.46"/><circle cx="374.7" cy="86.7" r="0.6" fill="#fff" opacity="0.75"/><circle cx="458.5" cy="277.4" r="0.6" fill="#fff" opacity="0.62"/><circle cx="411.8" cy="187.0" r="1.2" fill="#fff" opacity="0.48"/><circle cx="112.9" cy="203.3" r="1.2" fill="#fff" opacity="0.82"/><circle cx="449.6" cy="57.6" r="0.8" fill="#fff" opacity="0.63"/><circle cx="306.5" cy="114.2" r="1.2" fill="#fff" opacity="0.87"/><circle cx="114.8" cy="119.5" r="0.6" fill="#fff" opacity="0.86"/><circle cx="378.0" cy="251.5" r="0.6" fill="#fff" opacity="0.41"/><circle cx="304.3" cy="282.8" r="0.7" fill="#fff" opacity="0.60"/><circle cx="460.8" cy="201.6" r="0.6" fill="#fff" opacity="0.75"/><circle cx="352.6" cy="105.7" r="1.0" fill="#fff" opacity="0.48"/><circle cx="10.4" cy="81.9" r="1.0" fill="#fff" opacity="0.53"/><circle cx="7.6" cy="119.5" r="0.8" fill="#fff" opacity="0.51"/><circle cx="57.3" cy="277.5" r="0.9" fill="#fff" opacity="0.54"/><circle cx="449.8" cy="247.3" r="1.9" fill="#fff" opacity="0.77"/><circle cx="253.7" cy="135.5" r="1.0" fill="#fff" opacity="0.63"/><circle cx="452.5" cy="73.5" r="1.0" fill="#fff" opacity="0.58"/><circle cx="328.5" cy="12.9" r="0.9" fill="#fff" opacity="0.57"/><circle cx="467.9" cy="182.7" r="1.2" fill="#fff" opacity="0.80"/><circle cx="230.5" cy="130.3" r="0.9" fill="#fff" opacity="0.39"/><circle cx="125.2" cy="318.5" r="1.0" fill="#fff" opacity="0.37"/><circle cx="404.9" cy="234.5" r="1.9" fill="#fff" opacity="0.69"/><circle cx="476.2" cy="142.8" r="0.6" fill="#fff" opacity="0.70"/><circle cx="341.8" cy="71.1" r="1.2" fill="#fff" opacity="0.94"/><circle cx="467.3" cy="201.6" r="0.9" fill="#fff" opacity="0.71"/><circle cx="123.1" cy="102.0" r="0.7" fill="#fff" opacity="0.94"/><circle cx="113.5" cy="54.3" r="0.8" fill="#fff" opacity="0.82"/><circle cx="456.9" cy="243.4" r="0.7" fill="#fff" opacity="0.72"/><circle cx="474.2" cy="14.3" r="1.5" fill="#fff" opacity="0.88"/><circle cx="332.9" cy="127.2" r="1.5" fill="#fff" opacity="0.65"/><circle cx="490.9" cy="78.7" r="0.9" fill="#fff" opacity="0.75"/><circle cx="33.4" cy="61.2" r="1.0" fill="#fff" opacity="0.91"/><circle cx="337.3" cy="39.4" r="1.5" fill="#fff" opacity="0.91"/><circle cx="162.2" cy="2.3" r="1.5" fill="#fff" opacity="0.42"/><circle cx="128.5" cy="38.3" r="1.2" fill="#fff" opacity="0.68"/></g></svg><div class="warn">Evaluation Warning : The document was created with Spire.PDF for .NET.</div><div class="pframe"></div><div class="ptitle">New Zealand</div><div class="prule"></div><div class="pital">From Wikipedia, the free encyclopedia</div><div class="pl" style="left:75px;top:118.88px;width:359px;text-align:justify;text-align-last:justify">New Zealand (M&#257;ori: Aotearoa) is an island country located in the southwestern Pacific</div><div class="pl" style="left:75px;top:136.88px;width:359px;text-align:justify;text-align-last:justify">Ocean. The country geographically comprises two main landmasses &ndash; that of the North</div><div class="pl" style="left:75px;top:154.88px;width:359px;text-align:justify;text-align-last:justify">and South Islands &ndash; as well as numerous smaller islands. New Zealand is situated some</div><div class="pl" style="left:75px;top:172.88px;width:359px;text-align:justify;text-align-last:justify">1,500 kilometres (900 mi) east of Australia across the Tasman Sea and roughly 1,000</div><div class="pl" style="left:75px;top:190.88px;width:359px;text-align:justify;text-align-last:justify">kilometres (600 mi) south of the Pacific island nations of New Caledonia, Fiji, and Tonga.</div><div class="pl" style="left:75px;top:208.88px;width:359px;text-align:justify;text-align-last:left">Because of its remoteness, it was one of the last lands to be settled by humans.</div><div class="photo">
<svg width="181" height="100" viewBox="0 0 181 100" style="position:absolute;left:0;top:0">
 <defs>
  <linearGradient id="sky" x1="0" y1="0" x2="0.35" y2="1"><stop offset="0" stop-color="#3566b8"/><stop offset="0.5" stop-color="#4582d0"/><stop offset="1" stop-color="#6aa4e2"/></linearGradient>
  <filter id="bl1" x="-50%" y="-50%" width="200%" height="200%"><feGaussianBlur stdDeviation="1.8"/></filter>
  <filter id="bl2" x="-20%" y="-20%" width="140%" height="140%"><feGaussianBlur stdDeviation="0.45"/></filter>
 </defs>
 <rect width="181" height="100" fill="url(#sky)"/>
 <g filter="url(#bl1)" fill="#eef2f8">
  <ellipse cx="5" cy="11" rx="9" ry="10" opacity="0.95"/>
  <ellipse cx="30" cy="25" rx="14" ry="5.5" opacity="0.9" transform="rotate(10 30 25)"/>
  <ellipse cx="52" cy="30" rx="14" ry="4.5" opacity="0.85" transform="rotate(14 52 30)"/>
  <ellipse cx="72" cy="35" rx="10" ry="3" opacity="0.7" transform="rotate(12 72 35)"/>
  <ellipse cx="76" cy="12" rx="12" ry="3" opacity="0.4" transform="rotate(-10 76 12)"/>
  <ellipse cx="60" cy="18" rx="6" ry="2.5" opacity="0.3"/>
  <ellipse cx="101" cy="20" rx="4" ry="3.5" opacity="0.6"/>
  <ellipse cx="130" cy="21.5" rx="4.5" ry="2.6" opacity="0.6"/>
  <ellipse cx="177" cy="73" rx="5" ry="2.5" opacity="0.9"/>
  <ellipse cx="60" cy="45" rx="8" ry="3" opacity="0.2"/>
 </g>
 <g filter="url(#bl2)">
  <!-- bare tree -->
  <path d="M0 6 Q10 12 18 22 Q26 34 26 48 L22 60 L0 60 Z" fill="#9a9c9a" opacity="0.22"/>
  <g stroke="#6e6a60" stroke-width="0.7" fill="none" opacity="0.75">
   <path d="M6 60 Q8 40 4 20 M10 58 Q14 40 20 28 M14 56 Q20 46 25 40 M4 36 Q0 30 1 18 M8 44 Q14 36 12 24 M18 50 Q24 48 27 52 M6 30 Q10 22 14 18"/>
  </g>
  <!-- green tree -->
  <path d="M0 40 Q10 38 18 48 Q28 58 28 70 Q30 80 26 90 L0 92 Z" fill="#4a7a22"/>
  <path d="M2 54 Q14 52 20 64 Q24 76 14 84 L0 86 Z" fill="#86a83a" opacity="0.75"/>
  <!-- left wing -->
  <path d="M17 64 L24 61.5 L52 61.5 L57 64 Z" fill="#3e3a3a"/>
  <path d="M15 74 L20 63 L54 63 L58 74 Z" fill="#d0642e"/>
  <rect x="14" y="73.5" width="44" height="16" fill="#ebe7de"/>
  <path d="M19 76 V88 M24 76 V88 M30 76 V88 M46 76 V88 M52 76 V88" stroke="#6a625a" stroke-width="0.9"/>
  <circle cx="26.5" cy="58.6" r="2" fill="#c4582a"/>
  <circle cx="34.7" cy="55.6" r="2.1" fill="#c4582a"/>
  <circle cx="39.4" cy="60" r="1.7" fill="#c4582a"/>
  <circle cx="48" cy="57.4" r="2" fill="#c4582a"/>
  <path d="M26.5 60 V63 M48 59 V63" stroke="#5a4a40" stroke-width="0.9"/>
  <path d="M35 57 V90" stroke="#3a3a36" stroke-width="1.1"/>
  <!-- left gable timber -->
  <path d="M51 61.5 L42 74 L58 74 Z" fill="#f0ebe0"/>
  <path d="M51 61.5 L42 74 M51 61.5 L58 74 M46 70 H56" stroke="#5a5048" stroke-width="0.9"/>
  <!-- tower -->
  <path d="M81.4 37 L79.2 46.3 H84.2 Z" fill="#c4582a"/>
  <rect x="79.6" y="46" width="4.4" height="9" fill="#5e5650"/>
  <!-- big roof -->
  <path d="M71.6 55.7 L99.8 50.1 L110 67.7 L80 67.7 Z" fill="#c9561f"/>
  <path d="M68 66 L79 55.7 L80 67.7 Z" fill="#4a3a30"/>
  <!-- right gable -->
  <path d="M99.8 50.1 L91.2 66.8 L110 67.7 Z" fill="#ebe5d8"/>
  <path d="M99.8 50.1 L91.2 66.8 M99.8 50.1 L110 67.7 M95 60 H106" stroke="#4a4038" stroke-width="0.9"/>
  <rect x="91" y="66.8" width="19" height="21" fill="#e2dbcd"/>
  <path d="M95 69 V87 M99 69 V87 M103 69 V87 M107 69 V87" stroke="#5a5048" stroke-width="0.9"/>
  <!-- left lower gable -->
  <path d="M70.7 63.4 L57 75 L86 78 Z" fill="#cf602a"/>
  <path d="M70.7 66.5 L64 75.5 L79 76.5 Z" fill="#eee8dc"/>
  <rect x="57" y="67.7" width="34" height="20" fill="#e6e0d4" style="mix-blend-mode:normal"/>
  <path d="M70.7 63.4 L57 75 L86 78 Z" fill="#cf602a"/>
  <path d="M70.7 66.8 L64.5 75.2 L78.5 76.2 Z" fill="#ece6da"/>
  <path d="M62 78 V87 M68 78 V87 M74 78 V87 M84 70 V87" stroke="#5a5048" stroke-width="0.9"/>
  <path d="M75 73 Q77 78 76 86" stroke="#4a7a2a" stroke-width="2.2" fill="none"/>
  <!-- lower right roofs -->
  <path d="M113 79 L117 71 L140 70 L146 78 L146 90 L113 90 Z" fill="#c24c2a"/>
  <rect x="116" y="78" width="30" height="11" fill="#d8d2c8"/>
  <!-- palms & trees -->
  <path d="M130.5 64 L131 90" stroke="#3a3428" stroke-width="1.5"/>
  <ellipse cx="130.5" cy="61" rx="5" ry="4" fill="#4a5424"/>
  <path d="M130.5 61.0 Q134.7 61.0 138.9 63.0 M130.5 61.0 Q133.9 62.5 138.4 66.1 M130.5 61.0 Q131.8 62.9 134.6 67.7 M130.5 61.0 Q131.1 64.0 133.9 70.1 M130.5 61.0 Q129.0 63.1 129.4 69.1 M130.5 61.0 Q126.9 62.0 124.5 67.7 M130.5 61.0 Q126.4 60.8 122.7 65.6 M130.5 61.0 Q127.0 59.7 123.3 63.3 M130.5 61.0 Q127.0 58.1 122.1 58.2 M130.5 61.0 Q128.7 57.4 124.9 56.1 M130.5 61.0 Q130.8 57.9 129.3 56.4 M130.5 61.0 Q132.8 57.7 133.1 55.3 M130.5 61.0 Q133.1 58.8 134.4 57.3 M130.5 61.0 Q134.6 60.2 138.3 59.4 " stroke="#556226" stroke-width="1.6" fill="none" stroke-linecap="round"/>
  <path d="M130.5 60.0 Q133.4 60.1 136.6 62.7 M130.5 60.0 Q132.1 61.6 135.1 65.9 M130.5 60.0 Q130.0 61.9 131.2 67.3 M130.5 60.0 Q128.9 61.2 128.5 66.3 M130.5 60.0 Q127.6 59.4 124.8 63.4 M130.5 60.0 Q128.7 58.3 126.3 58.9 M130.5 60.0 Q129.8 57.7 128.0 57.3 M130.5 60.0 Q131.7 57.6 131.6 56.3 M130.5 60.0 Q132.6 58.5 133.8 57.7 " stroke="#7a8438" stroke-width="1.6" fill="none" stroke-linecap="round"/>
  <ellipse cx="153" cy="70" rx="5.5" ry="5" fill="#6a6624"/>
  <path d="M153.0 69.0 Q156.0 69.0 159.2 71.4 M153.0 69.0 Q155.8 70.3 159.6 74.0 M153.0 69.0 Q154.0 70.8 156.5 75.6 M153.0 69.0 Q151.7 70.3 151.6 75.4 M153.0 69.0 Q150.2 69.9 148.5 75.3 M153.0 69.0 Q150.0 68.9 147.4 73.4 M153.0 69.0 Q150.4 67.2 147.0 67.9 M153.0 69.0 Q151.9 66.6 149.6 66.1 M153.0 69.0 Q153.1 66.4 151.8 65.5 M153.0 69.0 Q155.4 66.3 156.1 64.4 M153.0 69.0 Q156.4 67.7 159.1 66.7 " stroke="#8a8030" stroke-width="1.6" fill="none" stroke-linecap="round"/>
  <ellipse cx="166" cy="73" rx="7" ry="6" fill="#8c8c88" opacity="0.5"/>
  <rect x="174" y="79" width="7" height="12" fill="#2e3e22"/>
  <rect x="150" y="76" width="24" height="14" fill="#5a5a50"/>
  <!-- flowers -->
  <ellipse cx="112" cy="80" rx="8" ry="9" fill="#f4f2e6"/>
  <path d="M106 78 Q112 74 118 80 M108 84 Q113 82 117 86" stroke="#c8c4b0" stroke-width="0.8" fill="none"/>
  <ellipse cx="95" cy="84" rx="8" ry="4" fill="#f0eee2"/>
  <ellipse cx="126" cy="84" rx="7" ry="4.5" fill="#eceadc"/>
  <ellipse cx="142" cy="83" rx="6" ry="5" fill="#f2f0e4"/>
  <path d="M138 82 Q142 79 146 84" stroke="#c8c4b0" stroke-width="0.7" fill="none"/>
  <ellipse cx="157" cy="81" rx="7" ry="6" fill="#f0eee2"/>
  <path d="M152 80 Q157 76 162 82" stroke="#c8c4b0" stroke-width="0.7" fill="none"/>
  <ellipse cx="172" cy="84" rx="5" ry="4" fill="#ecebe0"/>
  <ellipse cx="60" cy="88" rx="10" ry="2.5" fill="#e8e6de"/>
 </g>
</svg></div><div class="pl" style="left:266px;top:233.38px;width:167px;text-align:justify;text-align-last:justify">During its long isolation, New Zealand</div><div class="pl" style="left:266px;top:251.38px;width:167px;text-align:justify;text-align-last:justify">developed a distinctive biodiversity of</div><div class="pl" style="left:266px;top:269.38px;width:167px;text-align:justify;text-align-last:justify">both animal and plant life. Most notable</div><div class="pl" style="left:266px;top:287.38px;width:167px;text-align:justify;text-align-last:justify">are the large number of unique bird</div><div class="pl" style="left:266px;top:305.38px;width:167px;text-align:justify;text-align-last:justify">species, many of which became extinct</div></div></div></div>
<div class="a" style="left:199px;top:288px;width:7px;height:7px;background:#333"></div>
<div class="a" style="left:131px;top:300px;font-size:12px;color:#000">1</div>
<div class="a" style="left:67px;top:354px;width:137px;height:88px;overflow:hidden;box-shadow:1px 1px 1px rgba(0,0,0,0.35)"><div style="position:absolute;left:0;top:0;width:507px;height:328px;transform:scale(0.2702);transform-origin:0 0"><div class="page" id="pg2t"><div class="pbg pbg2"></div><svg width="507" height="328" style="left:0;top:0"><circle cx="468.9" cy="311.1" r="0.7" fill="#fff" opacity="0.36"/><circle cx="155.5" cy="124.4" r="0.9" fill="#fff" opacity="0.51"/><circle cx="53.7" cy="321.9" r="0.6" fill="#fff" opacity="0.66"/><circle cx="372.2" cy="117.8" r="0.6" fill="#fff" opacity="0.70"/><circle cx="183.9" cy="249.2" r="1.0" fill="#fff" opacity="0.75"/><circle cx="159.4" cy="28.1" r="1.9" fill="#fff" opacity="0.70"/><circle cx="226.9" cy="210.7" r="0.8" fill="#fff" opacity="0.67"/><circle cx="341.4" cy="170.6" r="0.7" fill="#fff" opacity="0.41"/><circle cx="416.1" cy="108.5" r="1.0" fill="#fff" opacity="0.68"/><circle cx="453.5" cy="149.2" r="0.8" fill="#fff" opacity="0.41"/><circle cx="397.4" cy="231.9" r="0.9" fill="#fff" opacity="0.55"/><circle cx="72.2" cy="244.5" r="1.5" fill="#fff" opacity="0.45"/><circle cx="494.3" cy="18.3" r="0.6" fill="#fff" opacity="0.45"/><circle cx="114.4" cy="4.2" r="0.6" fill="#fff" opacity="0.67"/><circle cx="501.0" cy="245.7" r="1.5" fill="#fff" opacity="0.64"/><circle cx="382.8" cy="150.5" r="0.7" fill="#fff" opacity="0.41"/><circle cx="268.2" cy="55.7" r="0.9" fill="#fff" opacity="0.50"/><circle cx="213.8" cy="295.5" r="1.2" fill="#fff" opacity="0.74"/><circle cx="210.1" cy="54.1" r="1.5" fill="#fff" opacity="0.39"/><circle cx="487.0" cy="294.4" r="1.0" fill="#fff" opacity="0.61"/><circle cx="151.5" cy="282.2" r="0.6" fill="#fff" opacity="0.85"/><circle cx="55.0" cy="207.0" r="1.5" fill="#fff" opacity="0.50"/><circle cx="482.4" cy="25.8" r="0.7" fill="#fff" opacity="0.49"/><circle cx="284.4" cy="154.4" r="1.0" fill="#fff" opacity="0.35"/><circle cx="191.2" cy="257.7" r="1.5" fill="#fff" opacity="0.47"/><circle cx="345.3" cy="56.8" r="1.5" fill="#fff" opacity="0.92"/><circle cx="212.9" cy="90.9" r="0.8" fill="#fff" opacity="0.67"/><circle cx="151.0" cy="294.8" r="0.6" fill="#fff" opacity="0.87"/><circle cx="252.4" cy="254.8" r="1.5" fill="#fff" opacity="0.52"/><circle cx="162.1" cy="114.6" r="1.2" fill="#fff" opacity="0.45"/><circle cx="21.7" cy="290.9" r="1.0" fill="#fff" opacity="0.67"/><circle cx="500.9" cy="48.0" r="1.9" fill="#fff" opacity="0.94"/><circle cx="140.7" cy="252.5" r="0.6" fill="#fff" opacity="0.51"/><circle cx="139.8" cy="118.8" r="0.7" fill="#fff" opacity="0.46"/><circle cx="258.1" cy="200.4" r="0.7" fill="#fff" opacity="0.72"/><circle cx="353.1" cy="198.4" r="0.7" fill="#fff" opacity="0.90"/><circle cx="70.5" cy="240.1" r="1.0" fill="#fff" opacity="0.69"/><circle cx="390.7" cy="269.5" r="0.7" fill="#fff" opacity="0.55"/><circle cx="104.5" cy="139.9" r="0.9" fill="#fff" opacity="0.67"/><circle cx="435.5" cy="143.0" r="0.9" fill="#fff" opacity="0.80"/><circle cx="469.2" cy="102.3" r="0.8" fill="#fff" opacity="0.56"/><circle cx="497.9" cy="101.8" r="1.9" fill="#fff" opacity="0.59"/><circle cx="367.1" cy="248.7" r="0.9" fill="#fff" opacity="0.54"/><circle cx="185.8" cy="313.3" r="1.0" fill="#fff" opacity="0.62"/><circle cx="87.8" cy="269.5" r="0.6" fill="#fff" opacity="0.67"/><circle cx="315.9" cy="140.3" r="1.9" fill="#fff" opacity="0.94"/><circle cx="335.1" cy="141.1" r="0.6" fill="#fff" opacity="0.58"/><circle cx="193.9" cy="18.7" r="1.5" fill="#fff" opacity="0.56"/><circle cx="443.1" cy="235.9" r="0.7" fill="#fff" opacity="0.80"/><circle cx="411.5" cy="152.3" r="0.7" fill="#fff" opacity="0.60"/><circle cx="348.1" cy="321.1" r="0.7" fill="#fff" opacity="0.72"/><circle cx="380.4" cy="198.9" r="0.9" fill="#fff" opacity="0.86"/><circle cx="396.9" cy="102.4" r="1.5" fill="#fff" opacity="0.65"/><circle cx="276.8" cy="259.4" r="0.6" fill="#fff" opacity="0.48"/><circle cx="339.1" cy="258.3" r="0.7" fill="#fff" opacity="0.76"/><circle cx="480.2" cy="218.8" r="1.0" fill="#fff" opacity="0.93"/><circle cx="56.2" cy="271.3" r="0.7" fill="#fff" opacity="0.93"/><circle cx="213.9" cy="208.3" r="0.9" fill="#fff" opacity="0.90"/><circle cx="334.6" cy="222.1" r="0.8" fill="#fff" opacity="0.46"/><circle cx="72.1" cy="320.0" r="1.5" fill="#fff" opacity="0.81"/><circle cx="322.6" cy="45.7" r="1.2" fill="#fff" opacity="0.74"/><circle cx="4.2" cy="162.9" r="1.0" fill="#fff" opacity="0.75"/><circle cx="310.3" cy="273.0" r="0.7" fill="#fff" opacity="0.44"/><circle cx="311.2" cy="140.4" r="0.8" fill="#fff" opacity="0.66"/><circle cx="405.8" cy="275.2" r="0.7" fill="#fff" opacity="0.84"/><circle cx="64.7" cy="166.7" r="0.9" fill="#fff" opacity="0.76"/><circle cx="360.5" cy="48.4" r="1.5" fill="#fff" opacity="0.63"/><circle cx="80.9" cy="180.5" r="0.6" fill="#fff" opacity="0.69"/><circle cx="493.4" cy="31.6" r="0.8" fill="#fff" opacity="0.39"/><circle cx="189.0" cy="10.3" r="0.6" fill="#fff" opacity="0.45"/><circle cx="451.2" cy="114.5" r="1.2" fill="#fff" opacity="0.53"/><circle cx="406.5" cy="298.7" r="0.7" fill="#fff" opacity="0.59"/><circle cx="337.9" cy="123.4" r="0.8" fill="#fff" opacity="0.69"/><circle cx="329.0" cy="22.3" r="1.2" fill="#fff" opacity="0.77"/><circle cx="53.7" cy="240.4" r="1.2" fill="#fff" opacity="0.92"/><circle cx="321.2" cy="303.4" r="1.0" fill="#fff" opacity="0.43"/><circle cx="139.2" cy="178.2" r="1.5" fill="#fff" opacity="0.76"/><circle cx="398.9" cy="179.9" r="1.9" fill="#fff" opacity="0.56"/><circle cx="469.5" cy="256.0" r="0.7" fill="#fff" opacity="0.51"/><circle cx="59.0" cy="200.0" r="1.2" fill="#fff" opacity="0.60"/><circle cx="449.3" cy="80.6" r="1.0" fill="#fff" opacity="0.50"/><circle cx="469.9" cy="319.2" r="0.8" fill="#fff" opacity="0.65"/><circle cx="162.9" cy="253.0" r="1.2" fill="#fff" opacity="0.68"/><circle cx="298.2" cy="278.8" r="1.5" fill="#fff" opacity="0.89"/><circle cx="299.7" cy="241.2" r="0.8" fill="#fff" opacity="0.42"/><circle cx="231.1" cy="240.5" r="1.5" fill="#fff" opacity="0.89"/><circle cx="378.4" cy="92.6" r="0.8" fill="#fff" opacity="0.79"/><circle cx="427.4" cy="270.5" r="0.6" fill="#fff" opacity="0.43"/><circle cx="324.6" cy="255.6" r="0.8" fill="#fff" opacity="0.74"/><circle cx="129.7" cy="171.3" r="1.5" fill="#fff" opacity="0.60"/><circle cx="493.6" cy="285.0" r="1.0" fill="#fff" opacity="0.46"/><circle cx="421.7" cy="73.8" r="1.0" fill="#fff" opacity="0.66"/><circle cx="210.3" cy="316.1" r="0.9" fill="#fff" opacity="0.90"/><circle cx="21.3" cy="177.2" r="0.6" fill="#fff" opacity="0.35"/><circle cx="188.3" cy="242.0" r="1.5" fill="#fff" opacity="0.77"/><circle cx="292.2" cy="287.4" r="0.9" fill="#fff" opacity="0.51"/><circle cx="391.4" cy="43.6" r="0.9" fill="#fff" opacity="0.42"/><circle cx="506.6" cy="309.8" r="1.9" fill="#fff" opacity="0.67"/><circle cx="3.6" cy="165.9" r="0.6" fill="#fff" opacity="0.69"/><circle cx="168.3" cy="304.9" r="0.8" fill="#fff" opacity="0.64"/><circle cx="315.8" cy="102.5" r="0.9" fill="#fff" opacity="0.60"/><circle cx="330.3" cy="11.3" r="1.2" fill="#fff" opacity="0.59"/><circle cx="111.5" cy="30.5" r="0.9" fill="#fff" opacity="0.47"/><circle cx="352.0" cy="177.7" r="0.6" fill="#fff" opacity="0.64"/><circle cx="38.5" cy="269.9" r="0.9" fill="#fff" opacity="0.37"/><circle cx="409.1" cy="57.7" r="0.6" fill="#fff" opacity="0.77"/><circle cx="496.4" cy="170.1" r="0.9" fill="#fff" opacity="0.55"/><circle cx="435.9" cy="255.9" r="1.2" fill="#fff" opacity="0.79"/><circle cx="485.3" cy="319.0" r="1.5" fill="#fff" opacity="0.36"/><circle cx="97.2" cy="176.0" r="0.9" fill="#fff" opacity="0.90"/><circle cx="74.6" cy="304.2" r="1.9" fill="#fff" opacity="0.46"/><circle cx="407.3" cy="250.2" r="1.9" fill="#fff" opacity="0.81"/><circle cx="228.5" cy="33.0" r="1.5" fill="#fff" opacity="0.55"/><circle cx="8.2" cy="186.1" r="0.9" fill="#fff" opacity="0.47"/><circle cx="397.1" cy="122.5" r="0.7" fill="#fff" opacity="0.47"/><circle cx="267.0" cy="112.7" r="0.7" fill="#fff" opacity="0.50"/><circle cx="76.1" cy="100.5" r="1.2" fill="#fff" opacity="0.78"/><circle cx="460.8" cy="77.6" r="1.5" fill="#fff" opacity="0.67"/><circle cx="342.5" cy="234.3" r="1.5" fill="#fff" opacity="0.71"/><circle cx="206.8" cy="323.8" r="0.6" fill="#fff" opacity="0.63"/><circle cx="300.3" cy="263.5" r="0.7" fill="#fff" opacity="0.35"/><circle cx="436.0" cy="60.4" r="0.8" fill="#fff" opacity="0.95"/><circle cx="288.6" cy="266.0" r="1.5" fill="#fff" opacity="0.50"/><circle cx="178.0" cy="68.9" r="1.5" fill="#fff" opacity="0.92"/><circle cx="195.0" cy="134.7" r="0.8" fill="#fff" opacity="0.77"/><circle cx="11.2" cy="89.6" r="0.6" fill="#fff" opacity="0.44"/><circle cx="300.5" cy="99.3" r="0.9" fill="#fff" opacity="0.64"/><circle cx="433.3" cy="162.9" r="1.5" fill="#fff" opacity="0.64"/><circle cx="373.5" cy="284.6" r="1.2" fill="#fff" opacity="0.65"/><circle cx="22.6" cy="233.8" r="0.6" fill="#fff" opacity="0.85"/><circle cx="260.0" cy="304.8" r="0.9" fill="#fff" opacity="0.91"/><circle cx="179.2" cy="153.8" r="1.2" fill="#fff" opacity="0.43"/><circle cx="5.9" cy="101.4" r="0.9" fill="#fff" opacity="0.45"/><circle cx="329.0" cy="169.3" r="1.9" fill="#fff" opacity="0.76"/><circle cx="270.5" cy="275.9" r="1.5" fill="#fff" opacity="0.85"/><circle cx="272.1" cy="40.0" r="0.9" fill="#fff" opacity="0.47"/><circle cx="118.2" cy="146.7" r="1.0" fill="#fff" opacity="0.51"/><circle cx="500.3" cy="263.3" r="1.9" fill="#fff" opacity="0.51"/><circle cx="248.3" cy="190.8" r="0.9" fill="#fff" opacity="0.85"/><circle cx="427.0" cy="12.7" r="1.5" fill="#fff" opacity="0.62"/><circle cx="220.1" cy="14.8" r="1.9" fill="#fff" opacity="0.54"/><circle cx="287.3" cy="208.4" r="1.9" fill="#fff" opacity="0.40"/><circle cx="8.0" cy="97.4" r="1.9" fill="#fff" opacity="0.56"/><circle cx="498.6" cy="241.0" r="0.9" fill="#fff" opacity="0.89"/><circle cx="396.5" cy="23.6" r="0.7" fill="#fff" opacity="0.93"/><circle cx="126.0" cy="176.5" r="1.0" fill="#fff" opacity="0.77"/><circle cx="154.5" cy="78.6" r="1.2" fill="#fff" opacity="0.89"/><circle cx="229.2" cy="286.0" r="1.5" fill="#fff" opacity="0.71"/><circle cx="364.5" cy="188.2" r="1.5" fill="#fff" opacity="0.50"/><circle cx="406.1" cy="257.9" r="1.0" fill="#fff" opacity="0.50"/></svg><div class="pframe2"></div><div class="photo2"></div><div class="pl" style="left:266px;top:-6.12px;width:167px;text-align:justify;text-align-last:justify">after the arrival of humans and</div><div class="pl" style="left:266px;top:11.88px;width:167px;text-align:justify;text-align-last:justify">introduced mammals. With a mild</div><div class="pl" style="left:266px;top:29.88px;width:167px;text-align:justify;text-align-last:justify">maritime climate, the land was mostly</div><div class="pl" style="left:75px;top:45.88px;width:359px;text-align:justify;text-align-last:justify">covered in forest. The country&#39;s varied topography and its sharp mountain peaks, such</div><div class="pl" style="left:75px;top:63.88px;width:359px;text-align:justify;text-align-last:justify">as the Southern Alps, owe much to the tectonic uplift of land and volcanic eruptions.</div><div class="pl" style="left:75px;top:81.88px;width:359px;text-align:justify;text-align-last:left">Its capital city is Wellington, while its most populous city is Auckland.</div><div class="pl" style="left:75px;top:104.88px;width:359px;text-align:justify;text-align-last:justify">Polynesians settled New Zealand in 1250&ndash;1300 CE and developed a distinctive M&#257;ori</div><div class="pl" style="left:75px;top:122.88px;width:359px;text-align:justify;text-align-last:justify">culture. In 1642, Abel Tasman became the first European to sight New Zealand. In 1840,</div><div class="pl" style="left:75px;top:140.88px;width:359px;text-align:justify;text-align-last:justify">representatives of the United Kingdom and M&#257;ori chiefs signed the Treaty of Waitangi,</div><div class="pl" style="left:75px;top:158.88px;width:359px;text-align:justify;text-align-last:justify">which declared British sovereignty over the islands. In 1841, New Zealand became a</div><div class="pl" style="left:75px;top:176.88px;width:359px;text-align:justify;text-align-last:justify">colony within the British Empire and in 1907 it became a Dominion. Today, the majority</div><div class="pl" style="left:75px;top:194.88px;width:359px;text-align:justify;text-align-last:justify">of New Zealand&#39;s population of 4.5 million is of European descent; the indigenous</div><div class="pl" style="left:75px;top:212.88px;width:359px;text-align:justify;text-align-last:justify">M&#257;ori are the largest minority, followed by Asians and Pacific Islanders. Reflecting</div><div class="pl" style="left:75px;top:230.88px;width:359px;text-align:justify;text-align-last:justify">this, New Zealand&#39;s culture is mainly derived from M&#257;ori and early British settlers.</div><div class="pl" style="left:425px;top:266px">2</div></div></div></div>
<div class="a" style="left:131px;top:450px;font-size:12px;color:#000">2</div>
<!-- h scrollbar -->
<div class="a" style="left:56px;top:638px;width:159px;height:15px;background:#ececec"></div>
<div class="a" style="left:74px;top:638px;width:119px;height:15px;border:1px solid #9c9c9c;border-radius:2px;background:linear-gradient(#f6f6f6,#e8e8e8 45%,#d8d8d8 55%,#d2d2d2);box-shadow:inset 0 0 0 1px #fbfbfb"></div>
<div class="a" style="left:129px;top:642px;width:8px;height:7px;background:repeating-linear-gradient(90deg,#4a4a4a 0 1px,transparent 1px 3px)"></div>
<svg style="left:56px;top:638px" width="159" height="15">
 <path d="M9.5 5 V10.5 L6.2 7.75 Z" fill="#333"/>
 <path d="M149.5 5 V10.5 L152.8 7.75 Z" fill="#333"/>
</svg>

</body></html>
